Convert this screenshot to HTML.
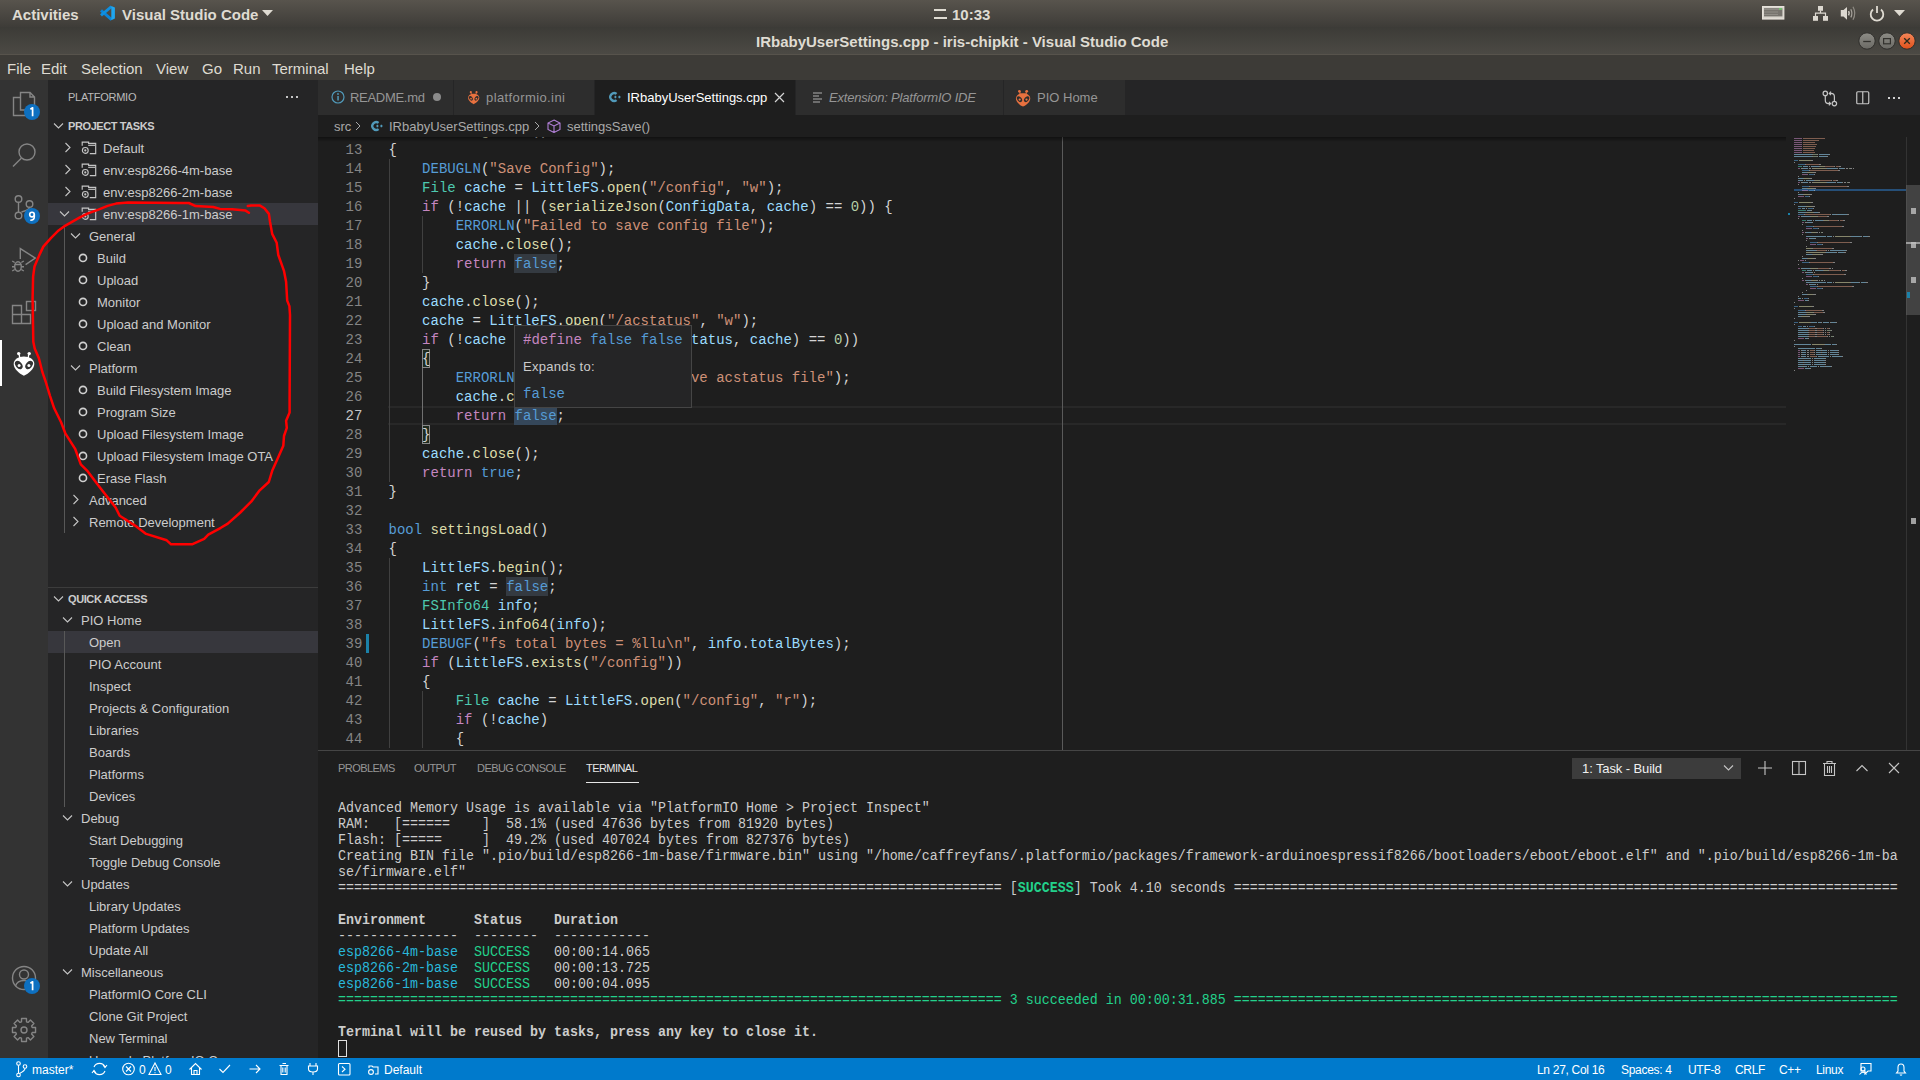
<!DOCTYPE html>
<html><head><meta charset="utf-8"><title>VS Code</title>
<style>
*{margin:0;padding:0;box-sizing:border-box}
html,body{width:1920px;height:1080px;overflow:hidden;background:#1e1e1e;font-family:'Liberation Sans', sans-serif;}
.a{position:absolute}
.t{position:absolute;white-space:pre;line-height:1}
.mono{font-family:'Liberation Mono', monospace}
</style></head><body>

<div class="a" style="left:0;top:0;width:1920px;height:27px;background:linear-gradient(#58544d,#3e3c38)"></div>
<div class="a" style="left:0;top:27px;width:1920px;height:28px;background:linear-gradient(#3c3b37,#4c4a45)"></div>
<div class="a" style="left:0;top:54px;width:1920px;height:1px;background:#57534c"></div>
<div class="a" style="left:0;top:55px;width:1920px;height:25px;background:#3d3b37"></div>
<div class="t" style="left:12px;top:6.50px;font-size:15px;height:15px;line-height:15px;color:#dfdbd2;font-weight:bold;font-family:'Liberation Sans', sans-serif;">Activities</div>
<svg class="a" style="left:96px;top:2px" width="24" height="24">
<path d="M5 8.3 L15.6 17.6" stroke="#0a84d8" stroke-width="2.9"/>
<path d="M5 13.4 L15.5 4.5" stroke="#0f8fe0" stroke-width="2.9"/>
<path d="M15.3 4 L18.9 5.6 V16.6 L15.3 18.2 Z" fill="#1fa6f0"/>
</svg>
<div class="t" style="left:122px;top:6.50px;font-size:15px;height:15px;line-height:15px;color:#dfdbd2;font-weight:bold;font-family:'Liberation Sans', sans-serif;">Visual Studio Code</div>
<svg class="a" style="left:262px;top:10px" width="11" height="7"><path d="M0 0 L11 0 L5.5 6 Z" fill="#dfdbd2"/></svg>
<div class="a" style="left:934px;top:9px;width:12px;height:2px;background:#dfdbd2"></div>
<div class="a" style="left:934px;top:17px;width:13px;height:2px;background:#dfdbd2"></div>
<div class="t" style="left:952px;top:6.50px;font-size:15px;height:15px;line-height:15px;color:#dfdbd2;font-weight:bold;font-family:'Liberation Sans', sans-serif;">10:33</div>
<svg class="a" style="left:1762px;top:6px" width="23" height="14"><rect x="0.6" y="0.6" width="21.2" height="12.4" fill="#d8d4cc" stroke="#e6e2da" stroke-width="1.2"/><rect x="2" y="2.2" width="18.4" height="8.2" fill="#77746e"/>
<path d="M2.5 3.5h15M2.5 6h13M2.5 8.5h13" stroke="#a9a59e" stroke-width="1" stroke-dasharray="1 1"/><rect x="17" y="2.2" width="3" height="1.5" fill="#6fcf6a"/></svg>
<svg class="a" style="left:1813px;top:5px" width="16" height="17"><rect x="5" y="1" width="5" height="4.8" fill="#dcd8d0"/><rect x="0" y="11" width="5" height="4.8" fill="#dcd8d0"/><rect x="10" y="11" width="5" height="4.8" fill="#dcd8d0"/>
<path d="M7.5 5.5 V8.2 M2.5 11 V8.2 H12.5 V11" stroke="#dcd8d0" stroke-width="1.2" fill="none"/></svg>
<svg class="a" style="left:1840px;top:5px" width="18" height="17"><path d="M0.8 5 H3.5 L7 2 V14.8 L3.5 11.5 H0.8 Z" fill="#dcd8d0"/>
<path d="M8.6 6.2 Q9.8 8.3 8.6 10.4" stroke="#dcd8d0" stroke-width="1.4" fill="none"/><path d="M10.8 4.2 Q13 8.3 10.8 12.4" stroke="#a9a59e" stroke-width="1.2" fill="none"/><path d="M13 1.8 Q16.5 8.3 13 14.8" stroke="#8e8a83" stroke-width="1.2" fill="none"/></svg>
<svg class="a" style="left:1869px;top:5px" width="16" height="17"><path d="M4 4.5 A6.3 6.3 0 1 0 12 4.5" stroke="#dfdbd2" stroke-width="1.8" fill="none"/><path d="M8 1 V8" stroke="#dfdbd2" stroke-width="1.8"/></svg>
<svg class="a" style="left:1894px;top:10px" width="12" height="7"><path d="M0 0 L11 0 L5.5 6 Z" fill="#dfdbd2"/></svg>
<div class="t" style="left:756px;top:33.50px;font-size:15px;height:15px;line-height:15px;color:#dfdbd2;font-weight:bold;font-family:'Liberation Sans', sans-serif;">IRbabyUserSettings.cpp - iris-chipkit - Visual Studio Code</div>
<svg class="a" style="left:1857px;top:31px" width="60" height="20">
<defs><linearGradient id="gb" x1="0" y1="0" x2="0" y2="1"><stop offset="0" stop-color="#8e8d87"/><stop offset="1" stop-color="#6a6964"/></linearGradient>
<linearGradient id="gc" x1="0" y1="0" x2="0" y2="1"><stop offset="0" stop-color="#f4875a"/><stop offset="1" stop-color="#e0501a"/></linearGradient></defs>
<circle cx="10" cy="10" r="8.2" fill="url(#gb)" stroke="#2f2e2b" stroke-width="1"/>
<path d="M6.2 10.5 H13.8" stroke="#33322e" stroke-width="1.3"/>
<circle cx="30" cy="10" r="8.2" fill="url(#gb)" stroke="#2f2e2b" stroke-width="1"/>
<rect x="26.6" y="7.6" width="6.8" height="5.2" fill="none" stroke="#33322e" stroke-width="1.2"/>
<circle cx="50" cy="10" r="8.2" fill="url(#gc)" stroke="#2f2e2b" stroke-width="1"/>
<path d="M47.2 7.2 L52.8 12.8 M52.8 7.2 L47.2 12.8" stroke="#2a2a1c" stroke-width="1.3"/>
</svg>
<div class="t" style="left:7px;top:60.50px;font-size:15px;height:15px;line-height:15px;color:#dfdbd2;font-weight:normal;font-family:'Liberation Sans', sans-serif;">File</div>
<div class="t" style="left:41px;top:60.50px;font-size:15px;height:15px;line-height:15px;color:#dfdbd2;font-weight:normal;font-family:'Liberation Sans', sans-serif;">Edit</div>
<div class="t" style="left:81px;top:60.50px;font-size:15px;height:15px;line-height:15px;color:#dfdbd2;font-weight:normal;font-family:'Liberation Sans', sans-serif;">Selection</div>
<div class="t" style="left:156px;top:60.50px;font-size:15px;height:15px;line-height:15px;color:#dfdbd2;font-weight:normal;font-family:'Liberation Sans', sans-serif;">View</div>
<div class="t" style="left:202px;top:60.50px;font-size:15px;height:15px;line-height:15px;color:#dfdbd2;font-weight:normal;font-family:'Liberation Sans', sans-serif;">Go</div>
<div class="t" style="left:233px;top:60.50px;font-size:15px;height:15px;line-height:15px;color:#dfdbd2;font-weight:normal;font-family:'Liberation Sans', sans-serif;">Run</div>
<div class="t" style="left:272px;top:60.50px;font-size:15px;height:15px;line-height:15px;color:#dfdbd2;font-weight:normal;font-family:'Liberation Sans', sans-serif;">Terminal</div>
<div class="t" style="left:344px;top:60.50px;font-size:15px;height:15px;line-height:15px;color:#dfdbd2;font-weight:normal;font-family:'Liberation Sans', sans-serif;">Help</div>
<div class="a" style="left:0;top:80px;width:48px;height:978px;background:#333333"></div>
<svg class="a" style="left:0;top:80px" width="48" height="320" fill="none" stroke="#858585" stroke-width="1.4">
<path d="M20.5 12.5 H30 L34.5 17 V30 H20.5 Z M30 12.5 V17 H34.5"/>
<path d="M20.5 17.5 H13.5 V35.5 H27.5 V30"/>
<circle cx="27" cy="72" r="8"/>
<path d="M21.3 78.3 L13 86.6"/>
<circle cx="18.5" cy="119" r="3.3"/><circle cx="29.5" cy="124" r="3.3"/><circle cx="18.5" cy="135.5" r="3.3"/>
<path d="M18.5 122.3 V132.2 M29.5 127.3 Q29.5 130 21.5 132"/>
<path d="M20.3 179 V168.6 L35.3 178.1 L25.6 184.6"/>
<g transform="translate(18,186.5)"><ellipse cx="0" cy="0" rx="3.3" ry="4.7"/><path d="M-3.3 -2 H3.3 M-3.3 -4 L-5.8 -5.5 M3.3 -4 L5.8 -5.5 M-3.5 0.3 H-6 M3.5 0.3 H6 M-3.3 3 L-5.8 4.5 M3.3 3 L5.8 4.5"/></g>
<path d="M12.5 225.5 H21.5 V234.5 H30.5 V243.5 H12.5 Z M12.5 234.5 H21.5 V243.5"/>
<rect x="26.5" y="221.5" width="9" height="9"/>
</svg>
<svg class="a" style="left:24px;top:104px" width="16" height="16"><circle cx="8" cy="8" r="8" fill="#0e70c0"/><path d="M6.4 5.2 L8.6 3.8 V12.2" stroke="#fff" stroke-width="1.7" fill="none" stroke-linejoin="round"/></svg>
<svg class="a" style="left:24px;top:208px" width="16" height="16"><circle cx="8" cy="8" r="8" fill="#0e70c0"/><circle cx="8" cy="6.6" r="2.3" stroke="#fff" stroke-width="1.6" fill="none"/><path d="M10.3 6.6 V8.8 Q10.3 12.3 6.3 12.3" stroke="#fff" stroke-width="1.6" fill="none"/></svg>
<div class="a" style="left:0;top:340px;width:2px;height:46px;background:#ffffff"></div>
<svg class="a" style="left:8px;top:346px" width="32" height="32">
<circle cx="10.7" cy="7.6" r="1.7" fill="#fff"/><circle cx="21.2" cy="7.6" r="1.7" fill="#fff"/>
<path d="M11.3 8.9 L11.7 12 M20.6 8.9 L20.3 12" stroke="#fff" stroke-width="1.3"/>
<path d="M15.9 10.6 C10 10.6 5.7 13.6 5.7 18 C5.7 22.8 11 27.6 15.9 29.7 C20.8 27.6 26.3 22.8 26.3 18 C26.3 13.6 21.8 10.6 15.9 10.6 Z" fill="#fff"/>
<ellipse cx="10.8" cy="19" rx="3.1" ry="4.7" fill="#333" transform="rotate(-38 10.8 19)"/><ellipse cx="21.1" cy="19" rx="3.1" ry="4.7" fill="#333" transform="rotate(38 21.1 19)"/>
<circle cx="11.1" cy="19.4" r="1.5" fill="#fff"/><circle cx="20.9" cy="19.4" r="1.5" fill="#fff"/>
</svg>
<svg class="a" style="left:0;top:960px" width="48" height="90" fill="none" stroke="#858585" stroke-width="1.4">
<circle cx="24" cy="18" r="11.5"/><circle cx="24" cy="14.5" r="4.5"/><path d="M15.5 26 C17 21 21 20.5 24 20.5 C27 20.5 31 21 32.5 26"/>
<path d="M32.22 67.49 L35.54 67.55 L35.54 72.45 L32.22 72.51 L31.59 74.04 L33.90 76.43 L30.43 79.90 L28.04 77.59 L26.51 78.22 L26.45 81.54 L21.55 81.54 L21.49 78.22 L19.96 77.59 L17.57 79.90 L14.10 76.43 L16.41 74.04 L15.78 72.51 L12.46 72.45 L12.46 67.55 L15.78 67.49 L16.41 65.96 L14.10 63.57 L17.57 60.10 L19.96 62.41 L21.49 61.78 L21.55 58.46 L26.45 58.46 L26.51 61.78 L28.04 62.41 L30.43 60.10 L33.90 63.57 L31.59 65.96 Z" stroke-linejoin="round"/>
<circle cx="24" cy="70" r="3"/>
</svg>
<svg class="a" style="left:24px;top:978px" width="16" height="16"><circle cx="8" cy="8" r="8" fill="#0e70c0"/><path d="M6.4 5.2 L8.6 3.8 V12.2" stroke="#fff" stroke-width="1.7" fill="none" stroke-linejoin="round"/></svg>
<div class="a" style="left:48px;top:80px;width:270px;height:978px;background:#252526"></div>
<div class="t" style="left:68px;top:92.00px;font-size:11px;height:11px;line-height:11px;color:#bbbbbb;font-weight:normal;font-family:'Liberation Sans', sans-serif;letter-spacing:-0.25px;">PLATFORMIO</div>
<div class="a" style="left:286px;top:96px;width:2px;height:2px;background:#c5c5c5"></div>
<div class="a" style="left:291px;top:96px;width:2px;height:2px;background:#c5c5c5"></div>
<div class="a" style="left:296px;top:96px;width:2px;height:2px;background:#c5c5c5"></div>
<svg class="a" style="left:53px;top:122px" width="12" height="8"><path d="M1 1.5 L5.5 6 L10 1.5" stroke="#c5c5c5" stroke-width="1.1" fill="none"/></svg>
<div class="t" style="left:68px;top:121.00px;font-size:11px;height:11px;line-height:11px;color:#cccccc;font-weight:bold;font-family:'Liberation Sans', sans-serif;letter-spacing:-0.4px;">PROJECT TASKS</div>
<svg class="a" style="left:64px;top:142px" width="8" height="12"><path d="M1.5 1 L6 5.5 L1.5 10" stroke="#c5c5c5" stroke-width="1.1" fill="none"/></svg>
<svg class="a" style="left:81px;top:141px" width="16" height="15" fill="none" stroke="#c5c5c5" stroke-width="1.15">
<path d="M1.2 4.8 V1.1 H7.6 V2.3 H14.7 V12.6 H8.8"/><path d="M7.2 4.3 H14.1"/><circle cx="4.3" cy="9.4" r="2.9"/><circle cx="4.3" cy="9.4" r="1.1" fill="#c5c5c5" stroke="none"/></svg>
<div class="t" style="left:103px;top:142.00px;font-size:13px;height:13px;line-height:13px;color:#cccccc;font-weight:normal;font-family:'Liberation Sans', sans-serif;">Default</div>
<svg class="a" style="left:64px;top:164px" width="8" height="12"><path d="M1.5 1 L6 5.5 L1.5 10" stroke="#c5c5c5" stroke-width="1.1" fill="none"/></svg>
<svg class="a" style="left:81px;top:163px" width="16" height="15" fill="none" stroke="#c5c5c5" stroke-width="1.15">
<path d="M1.2 4.8 V1.1 H7.6 V2.3 H14.7 V12.6 H8.8"/><path d="M7.2 4.3 H14.1"/><circle cx="4.3" cy="9.4" r="2.9"/><circle cx="4.3" cy="9.4" r="1.1" fill="#c5c5c5" stroke="none"/></svg>
<div class="t" style="left:103px;top:164.00px;font-size:13px;height:13px;line-height:13px;color:#cccccc;font-weight:normal;font-family:'Liberation Sans', sans-serif;">env:esp8266-4m-base</div>
<svg class="a" style="left:64px;top:186px" width="8" height="12"><path d="M1.5 1 L6 5.5 L1.5 10" stroke="#c5c5c5" stroke-width="1.1" fill="none"/></svg>
<svg class="a" style="left:81px;top:185px" width="16" height="15" fill="none" stroke="#c5c5c5" stroke-width="1.15">
<path d="M1.2 4.8 V1.1 H7.6 V2.3 H14.7 V12.6 H8.8"/><path d="M7.2 4.3 H14.1"/><circle cx="4.3" cy="9.4" r="2.9"/><circle cx="4.3" cy="9.4" r="1.1" fill="#c5c5c5" stroke="none"/></svg>
<div class="t" style="left:103px;top:186.00px;font-size:13px;height:13px;line-height:13px;color:#cccccc;font-weight:normal;font-family:'Liberation Sans', sans-serif;">env:esp8266-2m-base</div>
<div class="a" style="left:48px;top:203px;width:270px;height:22px;background:#37373d"></div>
<svg class="a" style="left:59px;top:210px" width="12" height="8"><path d="M1 1.5 L5.5 6 L10 1.5" stroke="#c5c5c5" stroke-width="1.1" fill="none"/></svg>
<svg class="a" style="left:81px;top:207px" width="16" height="15" fill="none" stroke="#c5c5c5" stroke-width="1.15">
<path d="M1.2 4.8 V1.1 H7.6 V2.3 H14.7 V12.6 H8.8"/><path d="M7.2 4.3 H14.1"/><circle cx="4.3" cy="9.4" r="2.9"/><circle cx="4.3" cy="9.4" r="1.1" fill="#c5c5c5" stroke="none"/></svg>
<div class="t" style="left:103px;top:208.00px;font-size:13px;height:13px;line-height:13px;color:#cccccc;font-weight:normal;font-family:'Liberation Sans', sans-serif;">env:esp8266-1m-base</div>
<svg class="a" style="left:70px;top:232px" width="12" height="8"><path d="M1 1.5 L5.5 6 L10 1.5" stroke="#c5c5c5" stroke-width="1.1" fill="none"/></svg>
<div class="t" style="left:89px;top:230.00px;font-size:13px;height:13px;line-height:13px;color:#cccccc;font-weight:normal;font-family:'Liberation Sans', sans-serif;">General</div>
<svg class="a" style="left:78px;top:252px" width="12" height="12"><circle cx="5" cy="5.9" r="3.55" fill="none" stroke="#d0d0d0" stroke-width="1.6"/></svg>
<div class="t" style="left:97px;top:252.00px;font-size:13px;height:13px;line-height:13px;color:#cccccc;font-weight:normal;font-family:'Liberation Sans', sans-serif;">Build</div>
<svg class="a" style="left:78px;top:274px" width="12" height="12"><circle cx="5" cy="5.9" r="3.55" fill="none" stroke="#d0d0d0" stroke-width="1.6"/></svg>
<div class="t" style="left:97px;top:274.00px;font-size:13px;height:13px;line-height:13px;color:#cccccc;font-weight:normal;font-family:'Liberation Sans', sans-serif;">Upload</div>
<svg class="a" style="left:78px;top:296px" width="12" height="12"><circle cx="5" cy="5.9" r="3.55" fill="none" stroke="#d0d0d0" stroke-width="1.6"/></svg>
<div class="t" style="left:97px;top:296.00px;font-size:13px;height:13px;line-height:13px;color:#cccccc;font-weight:normal;font-family:'Liberation Sans', sans-serif;">Monitor</div>
<svg class="a" style="left:78px;top:318px" width="12" height="12"><circle cx="5" cy="5.9" r="3.55" fill="none" stroke="#d0d0d0" stroke-width="1.6"/></svg>
<div class="t" style="left:97px;top:318.00px;font-size:13px;height:13px;line-height:13px;color:#cccccc;font-weight:normal;font-family:'Liberation Sans', sans-serif;">Upload and Monitor</div>
<svg class="a" style="left:78px;top:340px" width="12" height="12"><circle cx="5" cy="5.9" r="3.55" fill="none" stroke="#d0d0d0" stroke-width="1.6"/></svg>
<div class="t" style="left:97px;top:340.00px;font-size:13px;height:13px;line-height:13px;color:#cccccc;font-weight:normal;font-family:'Liberation Sans', sans-serif;">Clean</div>
<svg class="a" style="left:70px;top:364px" width="12" height="8"><path d="M1 1.5 L5.5 6 L10 1.5" stroke="#c5c5c5" stroke-width="1.1" fill="none"/></svg>
<div class="t" style="left:89px;top:362.00px;font-size:13px;height:13px;line-height:13px;color:#cccccc;font-weight:normal;font-family:'Liberation Sans', sans-serif;">Platform</div>
<svg class="a" style="left:78px;top:384px" width="12" height="12"><circle cx="5" cy="5.9" r="3.55" fill="none" stroke="#d0d0d0" stroke-width="1.6"/></svg>
<div class="t" style="left:97px;top:384.00px;font-size:13px;height:13px;line-height:13px;color:#cccccc;font-weight:normal;font-family:'Liberation Sans', sans-serif;">Build Filesystem Image</div>
<svg class="a" style="left:78px;top:406px" width="12" height="12"><circle cx="5" cy="5.9" r="3.55" fill="none" stroke="#d0d0d0" stroke-width="1.6"/></svg>
<div class="t" style="left:97px;top:406.00px;font-size:13px;height:13px;line-height:13px;color:#cccccc;font-weight:normal;font-family:'Liberation Sans', sans-serif;">Program Size</div>
<svg class="a" style="left:78px;top:428px" width="12" height="12"><circle cx="5" cy="5.9" r="3.55" fill="none" stroke="#d0d0d0" stroke-width="1.6"/></svg>
<div class="t" style="left:97px;top:428.00px;font-size:13px;height:13px;line-height:13px;color:#cccccc;font-weight:normal;font-family:'Liberation Sans', sans-serif;">Upload Filesystem Image</div>
<svg class="a" style="left:78px;top:450px" width="12" height="12"><circle cx="5" cy="5.9" r="3.55" fill="none" stroke="#d0d0d0" stroke-width="1.6"/></svg>
<div class="t" style="left:97px;top:450.00px;font-size:13px;height:13px;line-height:13px;color:#cccccc;font-weight:normal;font-family:'Liberation Sans', sans-serif;">Upload Filesystem Image OTA</div>
<svg class="a" style="left:78px;top:472px" width="12" height="12"><circle cx="5" cy="5.9" r="3.55" fill="none" stroke="#d0d0d0" stroke-width="1.6"/></svg>
<div class="t" style="left:97px;top:472.00px;font-size:13px;height:13px;line-height:13px;color:#cccccc;font-weight:normal;font-family:'Liberation Sans', sans-serif;">Erase Flash</div>
<svg class="a" style="left:72px;top:494px" width="8" height="12"><path d="M1.5 1 L6 5.5 L1.5 10" stroke="#c5c5c5" stroke-width="1.1" fill="none"/></svg>
<div class="t" style="left:89px;top:494.00px;font-size:13px;height:13px;line-height:13px;color:#cccccc;font-weight:normal;font-family:'Liberation Sans', sans-serif;">Advanced</div>
<svg class="a" style="left:72px;top:516px" width="8" height="12"><path d="M1.5 1 L6 5.5 L1.5 10" stroke="#c5c5c5" stroke-width="1.1" fill="none"/></svg>
<div class="t" style="left:89px;top:516.00px;font-size:13px;height:13px;line-height:13px;color:#cccccc;font-weight:normal;font-family:'Liberation Sans', sans-serif;">Remote Development</div>
<div class="a" style="left:64px;top:225px;width:1px;height:308px;background:#585858"></div>
<div class="a" style="left:48px;top:587px;width:270px;height:1px;background:#3c3c3c"></div>
<svg class="a" style="left:53px;top:595px" width="12" height="8"><path d="M1 1.5 L5.5 6 L10 1.5" stroke="#c5c5c5" stroke-width="1.1" fill="none"/></svg>
<div class="t" style="left:68px;top:594.00px;font-size:11px;height:11px;line-height:11px;color:#cccccc;font-weight:bold;font-family:'Liberation Sans', sans-serif;letter-spacing:-0.4px;">QUICK ACCESS</div>
<svg class="a" style="left:62px;top:616px" width="12" height="8"><path d="M1 1.5 L5.5 6 L10 1.5" stroke="#c5c5c5" stroke-width="1.1" fill="none"/></svg>
<div class="t" style="left:81px;top:614.00px;font-size:13px;height:13px;line-height:13px;color:#cccccc;font-weight:normal;font-family:'Liberation Sans', sans-serif;">PIO Home</div>
<div class="a" style="left:48px;top:631px;width:270px;height:22px;background:#37373d"></div>
<div class="t" style="left:89px;top:636.00px;font-size:13px;height:13px;line-height:13px;color:#cccccc;font-weight:normal;font-family:'Liberation Sans', sans-serif;">Open</div>
<div class="t" style="left:89px;top:658.00px;font-size:13px;height:13px;line-height:13px;color:#cccccc;font-weight:normal;font-family:'Liberation Sans', sans-serif;">PIO Account</div>
<div class="t" style="left:89px;top:680.00px;font-size:13px;height:13px;line-height:13px;color:#cccccc;font-weight:normal;font-family:'Liberation Sans', sans-serif;">Inspect</div>
<div class="t" style="left:89px;top:702.00px;font-size:13px;height:13px;line-height:13px;color:#cccccc;font-weight:normal;font-family:'Liberation Sans', sans-serif;">Projects &amp; Configuration</div>
<div class="t" style="left:89px;top:724.00px;font-size:13px;height:13px;line-height:13px;color:#cccccc;font-weight:normal;font-family:'Liberation Sans', sans-serif;">Libraries</div>
<div class="t" style="left:89px;top:746.00px;font-size:13px;height:13px;line-height:13px;color:#cccccc;font-weight:normal;font-family:'Liberation Sans', sans-serif;">Boards</div>
<div class="t" style="left:89px;top:768.00px;font-size:13px;height:13px;line-height:13px;color:#cccccc;font-weight:normal;font-family:'Liberation Sans', sans-serif;">Platforms</div>
<div class="t" style="left:89px;top:790.00px;font-size:13px;height:13px;line-height:13px;color:#cccccc;font-weight:normal;font-family:'Liberation Sans', sans-serif;">Devices</div>
<svg class="a" style="left:62px;top:814px" width="12" height="8"><path d="M1 1.5 L5.5 6 L10 1.5" stroke="#c5c5c5" stroke-width="1.1" fill="none"/></svg>
<div class="t" style="left:81px;top:812.00px;font-size:13px;height:13px;line-height:13px;color:#cccccc;font-weight:normal;font-family:'Liberation Sans', sans-serif;">Debug</div>
<div class="t" style="left:89px;top:834.00px;font-size:13px;height:13px;line-height:13px;color:#cccccc;font-weight:normal;font-family:'Liberation Sans', sans-serif;">Start Debugging</div>
<div class="t" style="left:89px;top:856.00px;font-size:13px;height:13px;line-height:13px;color:#cccccc;font-weight:normal;font-family:'Liberation Sans', sans-serif;">Toggle Debug Console</div>
<svg class="a" style="left:62px;top:880px" width="12" height="8"><path d="M1 1.5 L5.5 6 L10 1.5" stroke="#c5c5c5" stroke-width="1.1" fill="none"/></svg>
<div class="t" style="left:81px;top:878.00px;font-size:13px;height:13px;line-height:13px;color:#cccccc;font-weight:normal;font-family:'Liberation Sans', sans-serif;">Updates</div>
<div class="t" style="left:89px;top:900.00px;font-size:13px;height:13px;line-height:13px;color:#cccccc;font-weight:normal;font-family:'Liberation Sans', sans-serif;">Library Updates</div>
<div class="t" style="left:89px;top:922.00px;font-size:13px;height:13px;line-height:13px;color:#cccccc;font-weight:normal;font-family:'Liberation Sans', sans-serif;">Platform Updates</div>
<div class="t" style="left:89px;top:944.00px;font-size:13px;height:13px;line-height:13px;color:#cccccc;font-weight:normal;font-family:'Liberation Sans', sans-serif;">Update All</div>
<svg class="a" style="left:62px;top:968px" width="12" height="8"><path d="M1 1.5 L5.5 6 L10 1.5" stroke="#c5c5c5" stroke-width="1.1" fill="none"/></svg>
<div class="t" style="left:81px;top:966.00px;font-size:13px;height:13px;line-height:13px;color:#cccccc;font-weight:normal;font-family:'Liberation Sans', sans-serif;">Miscellaneous</div>
<div class="t" style="left:89px;top:988.00px;font-size:13px;height:13px;line-height:13px;color:#cccccc;font-weight:normal;font-family:'Liberation Sans', sans-serif;">PlatformIO Core CLI</div>
<div class="t" style="left:89px;top:1010.00px;font-size:13px;height:13px;line-height:13px;color:#cccccc;font-weight:normal;font-family:'Liberation Sans', sans-serif;">Clone Git Project</div>
<div class="t" style="left:89px;top:1032.00px;font-size:13px;height:13px;line-height:13px;color:#cccccc;font-weight:normal;font-family:'Liberation Sans', sans-serif;">New Terminal</div>
<div class="t" style="left:89px;top:1054.00px;font-size:13px;height:13px;line-height:13px;color:#cccccc;font-weight:normal;font-family:'Liberation Sans', sans-serif;">Upgrade PlatformIO Core</div>
<div class="a" style="left:64px;top:631px;width:1px;height:176px;background:#585858"></div>
<div class="a" style="left:318px;top:80px;width:1602px;height:35px;background:#252526"></div>
<div class="a" style="left:318px;top:80px;width:135px;height:35px;background:#2d2d2d"></div>
<div class="a" style="left:454px;top:80px;width:140px;height:35px;background:#2d2d2d"></div>
<div class="a" style="left:595px;top:80px;width:200px;height:35px;background:#1e1e1e"></div>
<div class="a" style="left:796px;top:80px;width:207px;height:35px;background:#2d2d2d"></div>
<div class="a" style="left:1004px;top:80px;width:121px;height:35px;background:#2d2d2d"></div>
<svg class="a" style="left:331px;top:90px" width="14" height="14"><circle cx="7" cy="7" r="6" fill="none" stroke="#519aba" stroke-width="1.2"/><rect x="6.3" y="6" width="1.5" height="4.5" fill="#519aba"/><circle cx="7" cy="4" r="0.9" fill="#519aba"/></svg>
<div class="t" style="left:350px;top:91.00px;font-size:13px;height:13px;line-height:13px;color:#969696;font-weight:normal;font-family:'Liberation Sans', sans-serif;letter-spacing:-0.3px;">README.md</div>
<div class="a" style="left:433px;top:93px;width:8px;height:8px;border-radius:50%;background:#8b8b8b"></div>
<svg class="a" style="left:464.8px;top:87.7px" width="17.4" height="17.4" viewBox="0 0 32 32">
<circle cx="10.7" cy="7.6" r="2" fill="#e8713f"/><circle cx="21.2" cy="7.6" r="2" fill="#e8713f"/>
<path d="M11.3 8.9 L11.7 12 M20.6 8.9 L20.3 12" stroke="#e8713f" stroke-width="1.6"/>
<path d="M15.9 10.6 C10 10.6 5.7 13.6 5.7 18 C5.7 22.8 11 27.6 15.9 29.7 C20.8 27.6 26.3 22.8 26.3 18 C26.3 13.6 21.8 10.6 15.9 10.6 Z" fill="#e8713f"/>
<ellipse cx="10.8" cy="19" rx="3.1" ry="4.7" fill="#2d2d2d" transform="rotate(-38 10.8 19)"/><ellipse cx="21.1" cy="19" rx="3.1" ry="4.7" fill="#2d2d2d" transform="rotate(38 21.1 19)"/>
<circle cx="11.1" cy="19.6" r="1.6" fill="#e8713f"/><circle cx="20.9" cy="19.6" r="1.6" fill="#e8713f"/></svg>
<div class="t" style="left:486px;top:91.00px;font-size:13px;height:13px;line-height:13px;color:#969696;font-weight:normal;font-family:'Liberation Sans', sans-serif;letter-spacing:0.4px;">platformio.ini</div>
<svg class="a" style="left:609px;top:91px" width="14" height="12"><path d="M7.6 2.9 A3.9 3.9 0 1 0 7.6 9.1" stroke="#519aba" stroke-width="2.3" fill="none"/>
<path d="M5.2 6 H7.6 M6.4 4.8 V7.2 M9.1 6 H11.7 M10.4 4.7 V7.3" stroke="#519aba" stroke-width="1.2"/></svg>
<div class="t" style="left:627px;top:91.00px;font-size:13px;height:13px;line-height:13px;color:#ffffff;font-weight:normal;font-family:'Liberation Sans', sans-serif;">IRbabyUserSettings.cpp</div>
<svg class="a" style="left:774px;top:92px" width="11" height="11"><path d="M1 1 L10 10 M10 1 L1 10" stroke="#d4d4d4" stroke-width="1.2"/></svg>
<svg class="a" style="left:813px;top:92px" width="11" height="11"><path d="M0 1 H9 M0 4 H6 M0 7 H9 M0 10 H7" stroke="#b0b0b0" stroke-width="1.2"/></svg>
<div class="t" style="left:829px;top:91.00px;font-size:13px;height:13px;line-height:13px;color:#969696;font-weight:normal;font-family:'Liberation Sans', sans-serif;font-style:italic;letter-spacing:-0.2px;">Extension: PlatformIO IDE</div>
<svg class="a" style="left:1011.9px;top:85.5px" width="22.2" height="22.2" viewBox="0 0 32 32">
<circle cx="10.7" cy="7.6" r="2" fill="#e8713f"/><circle cx="21.2" cy="7.6" r="2" fill="#e8713f"/>
<path d="M11.3 8.9 L11.7 12 M20.6 8.9 L20.3 12" stroke="#e8713f" stroke-width="1.6"/>
<path d="M15.9 10.6 C10 10.6 5.7 13.6 5.7 18 C5.7 22.8 11 27.6 15.9 29.7 C20.8 27.6 26.3 22.8 26.3 18 C26.3 13.6 21.8 10.6 15.9 10.6 Z" fill="#e8713f"/>
<ellipse cx="10.8" cy="19" rx="3.1" ry="4.7" fill="#2d2d2d" transform="rotate(-38 10.8 19)"/><ellipse cx="21.1" cy="19" rx="3.1" ry="4.7" fill="#2d2d2d" transform="rotate(38 21.1 19)"/>
<circle cx="11.1" cy="19.6" r="1.6" fill="#e8713f"/><circle cx="20.9" cy="19.6" r="1.6" fill="#e8713f"/></svg>
<div class="t" style="left:1037px;top:91.00px;font-size:13px;height:13px;line-height:13px;color:#969696;font-weight:normal;font-family:'Liberation Sans', sans-serif;">PIO Home</div>
<svg class="a" style="left:1820px;top:88px" width="60" height="20" fill="none" stroke="#c5c5c5" stroke-width="1.2">
<circle cx="5.3" cy="5.4" r="2.2"/><circle cx="14.4" cy="15.6" r="2.2"/>
<path d="M5.3 7.6 V12.3 Q5.3 15.6 8.6 15.6 H10.6 M8.9 13.9 L10.6 15.6 L8.9 17.3"/>
<path d="M14.4 13.4 V8.7 Q14.4 5.4 11.1 5.4 H9.3 M11 3.7 L9.3 5.4 L11 7.1"/>
<rect x="36.75" y="3.75" width="12" height="12" rx="1"/><path d="M42.75 3.75 V15.75"/>
</svg>
<div class="a" style="left:1888px;top:97px;width:2px;height:2px;background:#d0d0d0"></div>
<div class="a" style="left:1893px;top:97px;width:2px;height:2px;background:#d0d0d0"></div>
<div class="a" style="left:1898px;top:97px;width:2px;height:2px;background:#d0d0d0"></div>
<div class="a" style="left:318px;top:115px;width:1602px;height:22px;background:#1e1e1e"></div>
<div class="t" style="left:334px;top:120.00px;font-size:13px;height:13px;line-height:13px;color:#a9a9a9;font-weight:normal;font-family:'Liberation Sans', sans-serif;">src</div>
<svg class="a" style="left:355px;top:121px" width="7" height="10"><path d="M1 1 L5 5 L1 9" stroke="#a9a9a9" stroke-width="1" fill="none"/></svg>
<svg class="a" style="left:371px;top:120px" width="14" height="12"><path d="M7.6 2.9 A3.9 3.9 0 1 0 7.6 9.1" stroke="#519aba" stroke-width="2.3" fill="none"/>
<path d="M5.2 6 H7.6 M6.4 4.8 V7.2 M9.1 6 H11.7 M10.4 4.7 V7.3" stroke="#519aba" stroke-width="1.2"/></svg>
<div class="t" style="left:389px;top:120.00px;font-size:13px;height:13px;line-height:13px;color:#a9a9a9;font-weight:normal;font-family:'Liberation Sans', sans-serif;">IRbabyUserSettings.cpp</div>
<svg class="a" style="left:534px;top:121px" width="7" height="10"><path d="M1 1 L5 5 L1 9" stroke="#a9a9a9" stroke-width="1" fill="none"/></svg>
<svg class="a" style="left:547px;top:119px" width="14" height="14" fill="none" stroke="#b180d7" stroke-width="1.1"><path d="M7 1 L13 4 V10.5 L7 13.5 L1 10.5 V4 Z M1 4 L7 7 L13 4 M7 7 V13.5"/></svg>
<div class="t" style="left:567px;top:120.00px;font-size:13px;height:13px;line-height:13px;color:#a9a9a9;font-weight:normal;font-family:'Liberation Sans', sans-serif;">settingsSave()</div>
<div class="a" style="left:318px;top:137px;width:1602px;height:613px;background:#1e1e1e;overflow:hidden">
<div class="a" style="left:70px;top:269px;width:1398px;height:19px;border-top:2px solid #282828;border-bottom:2px solid #282828"></div>
<div class="a" style="left:744px;top:0;width:1px;height:613px;background:#5a5a5a"></div>
<div class="a" style="left:196.0px;top:117px;width:42.5px;height:19px;background:#343a41"></div>
<div class="a" style="left:196.0px;top:271px;width:42.5px;height:17px;background:#35475a"></div>
<div class="a" style="left:187.6px;top:440px;width:42.5px;height:19px;background:#343a41"></div>
<div class="a" style="left:104.1px;top:212px;width:8.4px;height:19px;border:1px solid #888;background:#1e2a1e"></div>
<div class="a" style="left:104.1px;top:288px;width:8.4px;height:19px;border:1px solid #888;background:#1e2a1e"></div>
<div class="a" style="left:70.5px;top:22px;width:1px;height:323px;background:#404040"></div>
<div class="a" style="left:104.1px;top:79px;width:1px;height:57px;background:#404040"></div>
<div class="a" style="left:104.1px;top:231px;width:1px;height:57px;background:#707070"></div>
<div class="a" style="left:70.5px;top:421px;width:1px;height:190px;background:#404040"></div>
<div class="a" style="left:104.1px;top:554px;width:1px;height:57px;background:#404040"></div>
<div class="a" style="left:48px;top:497px;width:3px;height:19px;background:#1b81a8"></div>
<div class="t mono" style="left:27.5px;top:-15px;transform:scaleY(1.08);height:19px;line-height:19px;font-size:14px;color:#858585">12</div>
<div class="t mono" style="left:70.5px;top:-15px;transform:scaleY(1.08);height:19px;line-height:19px;font-size:14px"><span style="color:#569cd6">bool</span> <span style="color:#dcdcaa">settingsSave</span><span style="color:#d4d4d4">(</span><span style="color:#d4d4d4">)</span></div>
<div class="t mono" style="left:27.5px;top:4px;transform:scaleY(1.08);height:19px;line-height:19px;font-size:14px;color:#858585">13</div>
<div class="t mono" style="left:70.5px;top:4px;transform:scaleY(1.08);height:19px;line-height:19px;font-size:14px"><span style="color:#d4d4d4">{</span></div>
<div class="t mono" style="left:27.5px;top:23px;transform:scaleY(1.08);height:19px;line-height:19px;font-size:14px;color:#858585">14</div>
<div class="t mono" style="left:70.5px;top:23px;transform:scaleY(1.08);height:19px;line-height:19px;font-size:14px">    <span style="color:#569cd6">DEBUGLN</span><span style="color:#d4d4d4">(</span><span style="color:#ce9178">&quot;Save Config&quot;</span><span style="color:#d4d4d4">)</span><span style="color:#d4d4d4">;</span></div>
<div class="t mono" style="left:27.5px;top:42px;transform:scaleY(1.08);height:19px;line-height:19px;font-size:14px;color:#858585">15</div>
<div class="t mono" style="left:70.5px;top:42px;transform:scaleY(1.08);height:19px;line-height:19px;font-size:14px">    <span style="color:#4ec9b0">File</span> <span style="color:#9cdcfe">cache</span> <span style="color:#d4d4d4">=</span> <span style="color:#9cdcfe">LittleFS</span><span style="color:#d4d4d4">.</span><span style="color:#dcdcaa">open</span><span style="color:#d4d4d4">(</span><span style="color:#ce9178">&quot;/config&quot;</span><span style="color:#d4d4d4">,</span> <span style="color:#ce9178">&quot;w&quot;</span><span style="color:#d4d4d4">)</span><span style="color:#d4d4d4">;</span></div>
<div class="t mono" style="left:27.5px;top:61px;transform:scaleY(1.08);height:19px;line-height:19px;font-size:14px;color:#858585">16</div>
<div class="t mono" style="left:70.5px;top:61px;transform:scaleY(1.08);height:19px;line-height:19px;font-size:14px">    <span style="color:#c586c0">if</span> <span style="color:#d4d4d4">(</span><span style="color:#d4d4d4">!</span><span style="color:#9cdcfe">cache</span> <span style="color:#d4d4d4">|</span><span style="color:#d4d4d4">|</span> <span style="color:#d4d4d4">(</span><span style="color:#dcdcaa">serializeJson</span><span style="color:#d4d4d4">(</span><span style="color:#9cdcfe">ConfigData</span><span style="color:#d4d4d4">,</span> <span style="color:#9cdcfe">cache</span><span style="color:#d4d4d4">)</span> <span style="color:#d4d4d4">=</span><span style="color:#d4d4d4">=</span> <span style="color:#b5cea8">0</span><span style="color:#d4d4d4">)</span><span style="color:#d4d4d4">)</span> <span style="color:#d4d4d4">{</span></div>
<div class="t mono" style="left:27.5px;top:80px;transform:scaleY(1.08);height:19px;line-height:19px;font-size:14px;color:#858585">17</div>
<div class="t mono" style="left:70.5px;top:80px;transform:scaleY(1.08);height:19px;line-height:19px;font-size:14px">        <span style="color:#569cd6">ERRORLN</span><span style="color:#d4d4d4">(</span><span style="color:#ce9178">&quot;Failed to save config file&quot;</span><span style="color:#d4d4d4">)</span><span style="color:#d4d4d4">;</span></div>
<div class="t mono" style="left:27.5px;top:99px;transform:scaleY(1.08);height:19px;line-height:19px;font-size:14px;color:#858585">18</div>
<div class="t mono" style="left:70.5px;top:99px;transform:scaleY(1.08);height:19px;line-height:19px;font-size:14px">        <span style="color:#9cdcfe">cache</span><span style="color:#d4d4d4">.</span><span style="color:#dcdcaa">close</span><span style="color:#d4d4d4">(</span><span style="color:#d4d4d4">)</span><span style="color:#d4d4d4">;</span></div>
<div class="t mono" style="left:27.5px;top:118px;transform:scaleY(1.08);height:19px;line-height:19px;font-size:14px;color:#858585">19</div>
<div class="t mono" style="left:70.5px;top:118px;transform:scaleY(1.08);height:19px;line-height:19px;font-size:14px">        <span style="color:#c586c0">return</span> <span style="color:#569cd6">false</span><span style="color:#d4d4d4">;</span></div>
<div class="t mono" style="left:27.5px;top:137px;transform:scaleY(1.08);height:19px;line-height:19px;font-size:14px;color:#858585">20</div>
<div class="t mono" style="left:70.5px;top:137px;transform:scaleY(1.08);height:19px;line-height:19px;font-size:14px">    <span style="color:#d4d4d4">}</span></div>
<div class="t mono" style="left:27.5px;top:156px;transform:scaleY(1.08);height:19px;line-height:19px;font-size:14px;color:#858585">21</div>
<div class="t mono" style="left:70.5px;top:156px;transform:scaleY(1.08);height:19px;line-height:19px;font-size:14px">    <span style="color:#9cdcfe">cache</span><span style="color:#d4d4d4">.</span><span style="color:#dcdcaa">close</span><span style="color:#d4d4d4">(</span><span style="color:#d4d4d4">)</span><span style="color:#d4d4d4">;</span></div>
<div class="t mono" style="left:27.5px;top:175px;transform:scaleY(1.08);height:19px;line-height:19px;font-size:14px;color:#858585">22</div>
<div class="t mono" style="left:70.5px;top:175px;transform:scaleY(1.08);height:19px;line-height:19px;font-size:14px">    <span style="color:#9cdcfe">cache</span> <span style="color:#d4d4d4">=</span> <span style="color:#9cdcfe">LittleFS</span><span style="color:#d4d4d4">.</span><span style="color:#dcdcaa">open</span><span style="color:#d4d4d4">(</span><span style="color:#ce9178">&quot;/acstatus&quot;</span><span style="color:#d4d4d4">,</span> <span style="color:#ce9178">&quot;w&quot;</span><span style="color:#d4d4d4">)</span><span style="color:#d4d4d4">;</span></div>
<div class="t mono" style="left:27.5px;top:194px;transform:scaleY(1.08);height:19px;line-height:19px;font-size:14px;color:#858585">23</div>
<div class="t mono" style="left:70.5px;top:194px;transform:scaleY(1.08);height:19px;line-height:19px;font-size:14px">    <span style="color:#c586c0">if</span> <span style="color:#d4d4d4">(</span><span style="color:#d4d4d4">!</span><span style="color:#9cdcfe">cache</span> <span style="color:#d4d4d4">|</span><span style="color:#d4d4d4">|</span> <span style="color:#d4d4d4">(</span><span style="color:#dcdcaa">serializeJson</span><span style="color:#d4d4d4">(</span><span style="color:#9cdcfe">ACStatus</span><span style="color:#d4d4d4">,</span> <span style="color:#9cdcfe">cache</span><span style="color:#d4d4d4">)</span> <span style="color:#d4d4d4">=</span><span style="color:#d4d4d4">=</span> <span style="color:#b5cea8">0</span><span style="color:#d4d4d4">)</span><span style="color:#d4d4d4">)</span></div>
<div class="t mono" style="left:27.5px;top:213px;transform:scaleY(1.08);height:19px;line-height:19px;font-size:14px;color:#858585">24</div>
<div class="t mono" style="left:70.5px;top:213px;transform:scaleY(1.08);height:19px;line-height:19px;font-size:14px">    <span style="color:#d4d4d4">{</span></div>
<div class="t mono" style="left:27.5px;top:232px;transform:scaleY(1.08);height:19px;line-height:19px;font-size:14px;color:#858585">25</div>
<div class="t mono" style="left:70.5px;top:232px;transform:scaleY(1.08);height:19px;line-height:19px;font-size:14px">        <span style="color:#569cd6">ERRORLN</span><span style="color:#d4d4d4">(</span><span style="color:#ce9178">&quot;Failed to open &amp; save acstatus file&quot;</span><span style="color:#d4d4d4">)</span><span style="color:#d4d4d4">;</span></div>
<div class="t mono" style="left:27.5px;top:251px;transform:scaleY(1.08);height:19px;line-height:19px;font-size:14px;color:#858585">26</div>
<div class="t mono" style="left:70.5px;top:251px;transform:scaleY(1.08);height:19px;line-height:19px;font-size:14px">        <span style="color:#9cdcfe">cache</span><span style="color:#d4d4d4">.</span><span style="color:#dcdcaa">close</span><span style="color:#d4d4d4">(</span><span style="color:#d4d4d4">)</span><span style="color:#d4d4d4">;</span></div>
<div class="t mono" style="left:27.5px;top:270px;transform:scaleY(1.08);height:19px;line-height:19px;font-size:14px;color:#c6c6c6">27</div>
<div class="t mono" style="left:70.5px;top:270px;transform:scaleY(1.08);height:19px;line-height:19px;font-size:14px">        <span style="color:#c586c0">return</span> <span style="color:#569cd6">false</span><span style="color:#d4d4d4">;</span></div>
<div class="t mono" style="left:27.5px;top:289px;transform:scaleY(1.08);height:19px;line-height:19px;font-size:14px;color:#858585">28</div>
<div class="t mono" style="left:70.5px;top:289px;transform:scaleY(1.08);height:19px;line-height:19px;font-size:14px">    <span style="color:#d4d4d4">}</span></div>
<div class="t mono" style="left:27.5px;top:308px;transform:scaleY(1.08);height:19px;line-height:19px;font-size:14px;color:#858585">29</div>
<div class="t mono" style="left:70.5px;top:308px;transform:scaleY(1.08);height:19px;line-height:19px;font-size:14px">    <span style="color:#9cdcfe">cache</span><span style="color:#d4d4d4">.</span><span style="color:#dcdcaa">close</span><span style="color:#d4d4d4">(</span><span style="color:#d4d4d4">)</span><span style="color:#d4d4d4">;</span></div>
<div class="t mono" style="left:27.5px;top:327px;transform:scaleY(1.08);height:19px;line-height:19px;font-size:14px;color:#858585">30</div>
<div class="t mono" style="left:70.5px;top:327px;transform:scaleY(1.08);height:19px;line-height:19px;font-size:14px">    <span style="color:#c586c0">return</span> <span style="color:#569cd6">true</span><span style="color:#d4d4d4">;</span></div>
<div class="t mono" style="left:27.5px;top:346px;transform:scaleY(1.08);height:19px;line-height:19px;font-size:14px;color:#858585">31</div>
<div class="t mono" style="left:70.5px;top:346px;transform:scaleY(1.08);height:19px;line-height:19px;font-size:14px"><span style="color:#d4d4d4">}</span></div>
<div class="t mono" style="left:27.5px;top:365px;transform:scaleY(1.08);height:19px;line-height:19px;font-size:14px;color:#858585">32</div>
<div class="t mono" style="left:27.5px;top:384px;transform:scaleY(1.08);height:19px;line-height:19px;font-size:14px;color:#858585">33</div>
<div class="t mono" style="left:70.5px;top:384px;transform:scaleY(1.08);height:19px;line-height:19px;font-size:14px"><span style="color:#569cd6">bool</span> <span style="color:#dcdcaa">settingsLoad</span><span style="color:#d4d4d4">(</span><span style="color:#d4d4d4">)</span></div>
<div class="t mono" style="left:27.5px;top:403px;transform:scaleY(1.08);height:19px;line-height:19px;font-size:14px;color:#858585">34</div>
<div class="t mono" style="left:70.5px;top:403px;transform:scaleY(1.08);height:19px;line-height:19px;font-size:14px"><span style="color:#d4d4d4">{</span></div>
<div class="t mono" style="left:27.5px;top:422px;transform:scaleY(1.08);height:19px;line-height:19px;font-size:14px;color:#858585">35</div>
<div class="t mono" style="left:70.5px;top:422px;transform:scaleY(1.08);height:19px;line-height:19px;font-size:14px">    <span style="color:#9cdcfe">LittleFS</span><span style="color:#d4d4d4">.</span><span style="color:#dcdcaa">begin</span><span style="color:#d4d4d4">(</span><span style="color:#d4d4d4">)</span><span style="color:#d4d4d4">;</span></div>
<div class="t mono" style="left:27.5px;top:441px;transform:scaleY(1.08);height:19px;line-height:19px;font-size:14px;color:#858585">36</div>
<div class="t mono" style="left:70.5px;top:441px;transform:scaleY(1.08);height:19px;line-height:19px;font-size:14px">    <span style="color:#569cd6">int</span> <span style="color:#9cdcfe">ret</span> <span style="color:#d4d4d4">=</span> <span style="color:#569cd6">false</span><span style="color:#d4d4d4">;</span></div>
<div class="t mono" style="left:27.5px;top:460px;transform:scaleY(1.08);height:19px;line-height:19px;font-size:14px;color:#858585">37</div>
<div class="t mono" style="left:70.5px;top:460px;transform:scaleY(1.08);height:19px;line-height:19px;font-size:14px">    <span style="color:#4ec9b0">FSInfo64</span> <span style="color:#9cdcfe">info</span><span style="color:#d4d4d4">;</span></div>
<div class="t mono" style="left:27.5px;top:479px;transform:scaleY(1.08);height:19px;line-height:19px;font-size:14px;color:#858585">38</div>
<div class="t mono" style="left:70.5px;top:479px;transform:scaleY(1.08);height:19px;line-height:19px;font-size:14px">    <span style="color:#9cdcfe">LittleFS</span><span style="color:#d4d4d4">.</span><span style="color:#dcdcaa">info64</span><span style="color:#d4d4d4">(</span><span style="color:#9cdcfe">info</span><span style="color:#d4d4d4">)</span><span style="color:#d4d4d4">;</span></div>
<div class="t mono" style="left:27.5px;top:498px;transform:scaleY(1.08);height:19px;line-height:19px;font-size:14px;color:#858585">39</div>
<div class="t mono" style="left:70.5px;top:498px;transform:scaleY(1.08);height:19px;line-height:19px;font-size:14px">    <span style="color:#569cd6">DEBUGF</span><span style="color:#d4d4d4">(</span><span style="color:#ce9178">&quot;fs total bytes = %llu\n&quot;</span><span style="color:#d4d4d4">,</span> <span style="color:#9cdcfe">info</span><span style="color:#d4d4d4">.</span><span style="color:#9cdcfe">totalBytes</span><span style="color:#d4d4d4">)</span><span style="color:#d4d4d4">;</span></div>
<div class="t mono" style="left:27.5px;top:517px;transform:scaleY(1.08);height:19px;line-height:19px;font-size:14px;color:#858585">40</div>
<div class="t mono" style="left:70.5px;top:517px;transform:scaleY(1.08);height:19px;line-height:19px;font-size:14px">    <span style="color:#c586c0">if</span> <span style="color:#d4d4d4">(</span><span style="color:#9cdcfe">LittleFS</span><span style="color:#d4d4d4">.</span><span style="color:#dcdcaa">exists</span><span style="color:#d4d4d4">(</span><span style="color:#ce9178">&quot;/config&quot;</span><span style="color:#d4d4d4">)</span><span style="color:#d4d4d4">)</span></div>
<div class="t mono" style="left:27.5px;top:536px;transform:scaleY(1.08);height:19px;line-height:19px;font-size:14px;color:#858585">41</div>
<div class="t mono" style="left:70.5px;top:536px;transform:scaleY(1.08);height:19px;line-height:19px;font-size:14px">    <span style="color:#d4d4d4">{</span></div>
<div class="t mono" style="left:27.5px;top:555px;transform:scaleY(1.08);height:19px;line-height:19px;font-size:14px;color:#858585">42</div>
<div class="t mono" style="left:70.5px;top:555px;transform:scaleY(1.08);height:19px;line-height:19px;font-size:14px">        <span style="color:#4ec9b0">File</span> <span style="color:#9cdcfe">cache</span> <span style="color:#d4d4d4">=</span> <span style="color:#9cdcfe">LittleFS</span><span style="color:#d4d4d4">.</span><span style="color:#dcdcaa">open</span><span style="color:#d4d4d4">(</span><span style="color:#ce9178">&quot;/config&quot;</span><span style="color:#d4d4d4">,</span> <span style="color:#ce9178">&quot;r&quot;</span><span style="color:#d4d4d4">)</span><span style="color:#d4d4d4">;</span></div>
<div class="t mono" style="left:27.5px;top:574px;transform:scaleY(1.08);height:19px;line-height:19px;font-size:14px;color:#858585">43</div>
<div class="t mono" style="left:70.5px;top:574px;transform:scaleY(1.08);height:19px;line-height:19px;font-size:14px">        <span style="color:#c586c0">if</span> <span style="color:#d4d4d4">(</span><span style="color:#d4d4d4">!</span><span style="color:#9cdcfe">cache</span><span style="color:#d4d4d4">)</span></div>
<div class="t mono" style="left:27.5px;top:593px;transform:scaleY(1.08);height:19px;line-height:19px;font-size:14px;color:#858585">44</div>
<div class="t mono" style="left:70.5px;top:593px;transform:scaleY(1.08);height:19px;line-height:19px;font-size:14px">        <span style="color:#d4d4d4">{</span></div>
</div>
<div class="a" style="left:318px;top:137px;width:1468px;height:5px;background:linear-gradient(rgba(0,0,0,0.45),rgba(0,0,0,0))"></div>
<div class="a" style="left:514px;top:325px;width:178px;height:83px;background:#252526;border:1px solid #454545"></div>
<div class="t mono" style="left:523px;top:331px;height:19px;line-height:19px;font-size:14px;transform:scaleY(1.08)"><span style="color:#c586c0">#define</span> <span style="color:#569cd6">false</span> <span style="color:#569cd6">false</span></div>
<div class="t" style="left:523px;top:360.00px;font-size:13px;height:13px;line-height:13px;color:#cccccc;font-weight:normal;font-family:'Liberation Sans', sans-serif;letter-spacing:0.3px;">Expands to:</div>
<div class="t mono" style="left:523px;top:385px;height:19px;line-height:19px;font-size:14px;transform:scaleY(1.08);color:#569cd6">false</div>
<div class="a" style="left:1906px;top:137px;width:1px;height:613px;background:#333333"></div>
<div class="a" style="left:1906px;top:185px;width:14px;height:130px;background:rgba(121,121,121,0.4)"></div>
<div class="a" style="left:1911px;top:208px;width:5px;height:6px;background:#c0c0c0;opacity:0.8"></div>
<div class="a" style="left:1911px;top:242px;width:5px;height:6px;background:#c0c0c0;opacity:0.8"></div>
<div class="a" style="left:1911px;top:277px;width:5px;height:6px;background:#c0c0c0;opacity:0.8"></div>
<div class="a" style="left:1911px;top:518px;width:5px;height:6px;background:#c0c0c0;opacity:0.8"></div>
<div class="a" style="left:1906px;top:242px;width:14px;height:2px;background:#c0c0c0;opacity:0.7"></div>
<div class="a" style="left:1907px;top:292px;width:3px;height:6px;background:#1b81a8"></div>
<div class="a" style="left:318px;top:750px;width:1602px;height:308px;background:#1e1e1e;border-top:1px solid #454545"></div>
<div class="t" style="left:338px;top:763.00px;font-size:11px;height:11px;line-height:11px;color:#969696;font-weight:normal;font-family:'Liberation Sans', sans-serif;letter-spacing:-0.55px;">PROBLEMS</div>
<div class="t" style="left:414px;top:763.00px;font-size:11px;height:11px;line-height:11px;color:#969696;font-weight:normal;font-family:'Liberation Sans', sans-serif;letter-spacing:-0.55px;">OUTPUT</div>
<div class="t" style="left:477px;top:763.00px;font-size:11px;height:11px;line-height:11px;color:#969696;font-weight:normal;font-family:'Liberation Sans', sans-serif;letter-spacing:-0.55px;">DEBUG CONSOLE</div>
<div class="t" style="left:586px;top:763.00px;font-size:11px;height:11px;line-height:11px;color:#e7e7e7;font-weight:normal;font-family:'Liberation Sans', sans-serif;letter-spacing:-0.55px;">TERMINAL</div>
<div class="a" style="left:586px;top:782px;width:53px;height:1px;background:#e7e7e7"></div>
<div class="a" style="left:1572px;top:758px;width:169px;height:21px;background:#3c3c3c"></div>
<div class="t" style="left:1582px;top:762.00px;font-size:13px;height:13px;line-height:13px;color:#f0f0f0;font-weight:normal;font-family:'Liberation Sans', sans-serif;letter-spacing:-0.1px;">1: Task - Build</div>
<svg class="a" style="left:1723px;top:764px" width="11" height="8"><path d="M1 1.5 L5.5 6 L10 1.5" stroke="#c5c5c5" stroke-width="1.1" fill="none"/></svg>
<svg class="a" style="left:1756px;top:759px" width="150" height="18" fill="none" stroke="#c5c5c5" stroke-width="1.1">
<path d="M9 2 V16 M2 9 H16"/>
<rect x="36.5" y="2.5" width="13" height="13"/><path d="M43 2.5 V15.5"/>
<path d="M67 4.5 H80 M71 4.5 V2.5 H76 V4.5 M68.5 4.5 V16.5 H78.5 V4.5 M71.5 7 V14 M73.5 7 V14 M75.5 7 V14"/>
<path d="M100.5 12 L106 6.5 L111.5 12"/>
<path d="M133 4 L143 14 M143 4 L133 14"/>
</svg>
<div class="t mono" style="left:338px;top:800.5px;transform:scaleY(1.12);height:16px;line-height:16px;font-size:13.333px"><span style="color:#cccccc;">Advanced Memory Usage is available via &quot;PlatformIO Home &gt; Project Inspect&quot;</span></div>
<div class="t mono" style="left:338px;top:816.5px;transform:scaleY(1.12);height:16px;line-height:16px;font-size:13.333px"><span style="color:#cccccc;">RAM:   [======    ]  58.1% (used 47636 bytes from 81920 bytes)</span></div>
<div class="t mono" style="left:338px;top:832.5px;transform:scaleY(1.12);height:16px;line-height:16px;font-size:13.333px"><span style="color:#cccccc;">Flash: [=====     ]  49.2% (used 407024 bytes from 827376 bytes)</span></div>
<div class="t mono" style="left:338px;top:848.5px;transform:scaleY(1.12);height:16px;line-height:16px;font-size:13.333px"><span style="color:#cccccc;">Creating BIN file &quot;.pio/build/esp8266-1m-base/firmware.bin&quot; using &quot;/home/caffreyfans/.platformio/packages/framework-arduinoespressif8266/bootloaders/eboot/eboot.elf&quot; and &quot;.pio/build/esp8266-1m-ba</span></div>
<div class="t mono" style="left:338px;top:864.5px;transform:scaleY(1.12);height:16px;line-height:16px;font-size:13.333px"><span style="color:#cccccc;">se/firmware.elf&quot;</span></div>
<div class="t mono" style="left:338px;top:880.5px;transform:scaleY(1.12);height:16px;line-height:16px;font-size:13.333px"><span style="color:#cccccc;">=================================================================================== [</span><span style="color:#23d18b;font-weight:bold;">SUCCESS</span><span style="color:#cccccc;">] Took 4.10 seconds ===================================================================================</span></div>
<div class="t mono" style="left:338px;top:912.5px;transform:scaleY(1.12);height:16px;line-height:16px;font-size:13.333px"><span style="color:#cccccc;font-weight:bold;">Environment      Status    Duration</span></div>
<div class="t mono" style="left:338px;top:928.5px;transform:scaleY(1.12);height:16px;line-height:16px;font-size:13.333px"><span style="color:#cccccc;">---------------  --------  ------------</span></div>
<div class="t mono" style="left:338px;top:944.5px;transform:scaleY(1.12);height:16px;line-height:16px;font-size:13.333px"><span style="color:#29b8db;">esp8266-4m-base</span><span style="color:#cccccc;">  </span><span style="color:#23d18b;">SUCCESS</span><span style="color:#cccccc;">   00:00:14.065</span></div>
<div class="t mono" style="left:338px;top:960.5px;transform:scaleY(1.12);height:16px;line-height:16px;font-size:13.333px"><span style="color:#29b8db;">esp8266-2m-base</span><span style="color:#cccccc;">  </span><span style="color:#23d18b;">SUCCESS</span><span style="color:#cccccc;">   00:00:13.725</span></div>
<div class="t mono" style="left:338px;top:976.5px;transform:scaleY(1.12);height:16px;line-height:16px;font-size:13.333px"><span style="color:#29b8db;">esp8266-1m-base</span><span style="color:#cccccc;">  </span><span style="color:#23d18b;">SUCCESS</span><span style="color:#cccccc;">   00:00:04.095</span></div>
<div class="t mono" style="left:338px;top:992.5px;transform:scaleY(1.12);height:16px;line-height:16px;font-size:13.333px"><span style="color:#23d18b;">=================================================================================== 3 succeeded in 00:00:31.885 ===================================================================================</span></div>
<div class="t mono" style="left:338px;top:1024.5px;transform:scaleY(1.12);height:16px;line-height:16px;font-size:13.333px"><span style="color:#cccccc;font-weight:bold;">Terminal will be reused by tasks, press any key to close it.</span></div>
<div class="a" style="left:338px;top:1040px;width:9px;height:17px;border:1px solid #e0e0e0"></div>
<div class="a" style="left:0;top:1058px;width:1920px;height:22px;background:#007acc"></div>
<svg class="a" style="left:0;top:1058px" width="440" height="22" fill="none" stroke="#ffffff" stroke-width="1.1">
<circle cx="18.5" cy="5.5" r="1.8"/><circle cx="18.5" cy="17" r="1.8"/><circle cx="25" cy="8.5" r="1.8"/><path d="M18.5 7.3 V15.2 M25 10.3 Q25 13 19.5 15.5"/>
<path d="M94 9 A6 6 0 0 1 105 9 M105 13 A6 6 0 0 1 94 13 M103 7 L105 9.5 L107 7 M92 15 L94 12.5 L96 15"/>
<circle cx="128.5" cy="11" r="5.8"/><path d="M126 8.5 L131 13.5 M131 8.5 L126 13.5"/>
<path d="M155 5 L161 16.5 H149 Z M155 9 V13 M155 14.3 V15.2"/>
<path d="M189.5 11.5 L195.5 5.5 L201.5 11.5 M191.5 10 V16.5 H199.5 V10 M194 16.5 V12.5 H197 V16.5"/>
<path d="M219.5 11 L223 14.5 L230 7"/>
<path d="M249.5 11 H260 M256 7 L260 11 L256 15"/>
<path d="M279.5 7.5 H288.5 M281 7.5 V16.5 H287 V7.5 M282.5 5.5 H286 M282.8 9.5 V14.5 M285.2 9.5 V14.5"/>
<path d="M310 5 V8 M316 5 V8 M308.5 8 H317.5 V11 Q317.5 14 313 14 Q308.5 14 308.5 11 Z M313 14 V17"/>
<rect x="338.5" y="5.5" width="11.5" height="11.5" rx="1"/><path d="M342 8.5 L345 11.2 L342 14"/>
<path d="M369 10 V8 H372 L373 9 H378 V16 H375"/><circle cx="371" cy="14" r="2.4"/>
</svg>
<div class="t" style="left:32px;top:1063.50px;font-size:12px;height:12px;line-height:12px;color:#ffffff;font-weight:normal;font-family:'Liberation Sans', sans-serif;">master*</div>
<div class="t" style="left:139px;top:1063.50px;font-size:12px;height:12px;line-height:12px;color:#ffffff;font-weight:normal;font-family:'Liberation Sans', sans-serif;">0</div>
<div class="t" style="left:165px;top:1063.50px;font-size:12px;height:12px;line-height:12px;color:#ffffff;font-weight:normal;font-family:'Liberation Sans', sans-serif;">0</div>
<div class="t" style="left:384px;top:1063.50px;font-size:12px;height:12px;line-height:12px;color:#ffffff;font-weight:normal;font-family:'Liberation Sans', sans-serif;">Default</div>
<div class="t" style="left:1537px;top:1063.50px;font-size:12px;height:12px;line-height:12px;color:#ffffff;font-weight:normal;font-family:'Liberation Sans', sans-serif;letter-spacing:-0.3px;">Ln 27, Col 16</div>
<div class="t" style="left:1621px;top:1063.50px;font-size:12px;height:12px;line-height:12px;color:#ffffff;font-weight:normal;font-family:'Liberation Sans', sans-serif;letter-spacing:-0.3px;">Spaces: 4</div>
<div class="t" style="left:1688px;top:1063.50px;font-size:12px;height:12px;line-height:12px;color:#ffffff;font-weight:normal;font-family:'Liberation Sans', sans-serif;letter-spacing:-0.3px;">UTF-8</div>
<div class="t" style="left:1735px;top:1063.50px;font-size:12px;height:12px;line-height:12px;color:#ffffff;font-weight:normal;font-family:'Liberation Sans', sans-serif;letter-spacing:-0.3px;">CRLF</div>
<div class="t" style="left:1779px;top:1063.50px;font-size:12px;height:12px;line-height:12px;color:#ffffff;font-weight:normal;font-family:'Liberation Sans', sans-serif;letter-spacing:-0.3px;">C++</div>
<div class="t" style="left:1816px;top:1063.50px;font-size:12px;height:12px;line-height:12px;color:#ffffff;font-weight:normal;font-family:'Liberation Sans', sans-serif;letter-spacing:-0.3px;">Linux</div>
<svg class="a" style="left:1855px;top:1058px" width="60" height="22" fill="none" stroke="#ffffff" stroke-width="1.1">
<path d="M6 5.5 H16 V13 H13 L10 16 V13 H6 Z"/><circle cx="8" cy="11" r="2"/><path d="M4.5 16.5 Q8 12 11.5 16.5"/>
<path d="M41.5 15 H50.5 L49 13 V9.5 Q49 6 46 6 Q43 6 43 9.5 V13 Z M45 16.5 Q46 18 47 16.5"/>
</svg>
<div class="a" style="left:1794px;top:189px;width:112px;height:2px;background:#264f78"></div>
<svg class="a" style="left:1794px;top:137.5px;opacity:0.55" width="111" height="240" shape-rendering="crispEdges"><rect x="0" y="0" width="8" height="1" fill="#c586c0"/><rect x="9" y="0" width="22" height="1" fill="#ce9178"/><rect x="0" y="2" width="8" height="1" fill="#c586c0"/><rect x="9" y="2" width="16" height="1" fill="#ce9178"/><rect x="0" y="4" width="8" height="1" fill="#c586c0"/><rect x="9" y="4" width="12" height="1" fill="#ce9178"/><rect x="0" y="6" width="8" height="1" fill="#c586c0"/><rect x="9" y="6" width="14" height="1" fill="#ce9178"/><rect x="0" y="8" width="8" height="1" fill="#c586c0"/><rect x="9" y="8" width="13" height="1" fill="#ce9178"/><rect x="0" y="10" width="8" height="1" fill="#c586c0"/><rect x="9" y="10" width="12" height="1" fill="#ce9178"/><rect x="0" y="12" width="8" height="1" fill="#c586c0"/><rect x="9" y="12" width="11" height="1" fill="#ce9178"/><rect x="0" y="14" width="8" height="1" fill="#c586c0"/><rect x="9" y="14" width="12" height="1" fill="#ce9178"/><rect x="0" y="16" width="18" height="1" fill="#9cdcfe"/><rect x="18" y="16" width="1" height="1" fill="#d4d4d4"/><rect x="19" y="16" width="4" height="1" fill="#b5cea8"/><rect x="23" y="16" width="1" height="1" fill="#d4d4d4"/><rect x="25" y="16" width="10" height="1" fill="#9cdcfe"/><rect x="35" y="16" width="1" height="1" fill="#d4d4d4"/><rect x="0" y="18" width="18" height="1" fill="#9cdcfe"/><rect x="18" y="18" width="1" height="1" fill="#d4d4d4"/><rect x="19" y="18" width="4" height="1" fill="#b5cea8"/><rect x="23" y="18" width="1" height="1" fill="#d4d4d4"/><rect x="25" y="18" width="8" height="1" fill="#9cdcfe"/><rect x="33" y="18" width="1" height="1" fill="#d4d4d4"/><rect x="0" y="22" width="4" height="1" fill="#569cd6"/><rect x="5" y="22" width="12" height="1" fill="#dcdcaa"/><rect x="17" y="22" width="1" height="1" fill="#d4d4d4"/><rect x="18" y="22" width="1" height="1" fill="#d4d4d4"/><rect x="0" y="24" width="1" height="1" fill="#d4d4d4"/><rect x="4" y="26" width="7" height="1" fill="#569cd6"/><rect x="11" y="26" width="1" height="1" fill="#d4d4d4"/><rect x="12" y="26" width="13" height="1" fill="#ce9178"/><rect x="25" y="26" width="1" height="1" fill="#d4d4d4"/><rect x="26" y="26" width="1" height="1" fill="#d4d4d4"/><rect x="4" y="28" width="4" height="1" fill="#4ec9b0"/><rect x="9" y="28" width="5" height="1" fill="#9cdcfe"/><rect x="15" y="28" width="1" height="1" fill="#d4d4d4"/><rect x="17" y="28" width="8" height="1" fill="#9cdcfe"/><rect x="25" y="28" width="1" height="1" fill="#d4d4d4"/><rect x="26" y="28" width="4" height="1" fill="#dcdcaa"/><rect x="30" y="28" width="1" height="1" fill="#d4d4d4"/><rect x="31" y="28" width="9" height="1" fill="#ce9178"/><rect x="40" y="28" width="1" height="1" fill="#d4d4d4"/><rect x="42" y="28" width="3" height="1" fill="#ce9178"/><rect x="45" y="28" width="1" height="1" fill="#d4d4d4"/><rect x="46" y="28" width="1" height="1" fill="#d4d4d4"/><rect x="4" y="30" width="2" height="1" fill="#c586c0"/><rect x="7" y="30" width="1" height="1" fill="#d4d4d4"/><rect x="8" y="30" width="1" height="1" fill="#d4d4d4"/><rect x="9" y="30" width="5" height="1" fill="#9cdcfe"/><rect x="15" y="30" width="1" height="1" fill="#d4d4d4"/><rect x="16" y="30" width="1" height="1" fill="#d4d4d4"/><rect x="18" y="30" width="1" height="1" fill="#d4d4d4"/><rect x="19" y="30" width="13" height="1" fill="#dcdcaa"/><rect x="32" y="30" width="1" height="1" fill="#d4d4d4"/><rect x="33" y="30" width="10" height="1" fill="#9cdcfe"/><rect x="43" y="30" width="1" height="1" fill="#d4d4d4"/><rect x="45" y="30" width="5" height="1" fill="#9cdcfe"/><rect x="50" y="30" width="1" height="1" fill="#d4d4d4"/><rect x="52" y="30" width="1" height="1" fill="#d4d4d4"/><rect x="53" y="30" width="1" height="1" fill="#d4d4d4"/><rect x="55" y="30" width="1" height="1" fill="#b5cea8"/><rect x="56" y="30" width="1" height="1" fill="#d4d4d4"/><rect x="57" y="30" width="1" height="1" fill="#d4d4d4"/><rect x="59" y="30" width="1" height="1" fill="#d4d4d4"/><rect x="8" y="32" width="7" height="1" fill="#569cd6"/><rect x="15" y="32" width="1" height="1" fill="#d4d4d4"/><rect x="16" y="32" width="28" height="1" fill="#ce9178"/><rect x="44" y="32" width="1" height="1" fill="#d4d4d4"/><rect x="45" y="32" width="1" height="1" fill="#d4d4d4"/><rect x="8" y="34" width="5" height="1" fill="#9cdcfe"/><rect x="13" y="34" width="1" height="1" fill="#d4d4d4"/><rect x="14" y="34" width="5" height="1" fill="#dcdcaa"/><rect x="19" y="34" width="1" height="1" fill="#d4d4d4"/><rect x="20" y="34" width="1" height="1" fill="#d4d4d4"/><rect x="21" y="34" width="1" height="1" fill="#d4d4d4"/><rect x="8" y="36" width="6" height="1" fill="#c586c0"/><rect x="15" y="36" width="5" height="1" fill="#569cd6"/><rect x="20" y="36" width="1" height="1" fill="#d4d4d4"/><rect x="4" y="38" width="1" height="1" fill="#d4d4d4"/><rect x="4" y="40" width="5" height="1" fill="#9cdcfe"/><rect x="9" y="40" width="1" height="1" fill="#d4d4d4"/><rect x="10" y="40" width="5" height="1" fill="#dcdcaa"/><rect x="15" y="40" width="1" height="1" fill="#d4d4d4"/><rect x="16" y="40" width="1" height="1" fill="#d4d4d4"/><rect x="17" y="40" width="1" height="1" fill="#d4d4d4"/><rect x="4" y="42" width="5" height="1" fill="#9cdcfe"/><rect x="10" y="42" width="1" height="1" fill="#d4d4d4"/><rect x="12" y="42" width="8" height="1" fill="#9cdcfe"/><rect x="20" y="42" width="1" height="1" fill="#d4d4d4"/><rect x="21" y="42" width="4" height="1" fill="#dcdcaa"/><rect x="25" y="42" width="1" height="1" fill="#d4d4d4"/><rect x="26" y="42" width="11" height="1" fill="#ce9178"/><rect x="37" y="42" width="1" height="1" fill="#d4d4d4"/><rect x="39" y="42" width="3" height="1" fill="#ce9178"/><rect x="42" y="42" width="1" height="1" fill="#d4d4d4"/><rect x="43" y="42" width="1" height="1" fill="#d4d4d4"/><rect x="4" y="44" width="2" height="1" fill="#c586c0"/><rect x="7" y="44" width="1" height="1" fill="#d4d4d4"/><rect x="8" y="44" width="1" height="1" fill="#d4d4d4"/><rect x="9" y="44" width="5" height="1" fill="#9cdcfe"/><rect x="15" y="44" width="1" height="1" fill="#d4d4d4"/><rect x="16" y="44" width="1" height="1" fill="#d4d4d4"/><rect x="18" y="44" width="1" height="1" fill="#d4d4d4"/><rect x="19" y="44" width="13" height="1" fill="#dcdcaa"/><rect x="32" y="44" width="1" height="1" fill="#d4d4d4"/><rect x="33" y="44" width="8" height="1" fill="#9cdcfe"/><rect x="41" y="44" width="1" height="1" fill="#d4d4d4"/><rect x="43" y="44" width="5" height="1" fill="#9cdcfe"/><rect x="48" y="44" width="1" height="1" fill="#d4d4d4"/><rect x="50" y="44" width="1" height="1" fill="#d4d4d4"/><rect x="51" y="44" width="1" height="1" fill="#d4d4d4"/><rect x="53" y="44" width="1" height="1" fill="#b5cea8"/><rect x="54" y="44" width="1" height="1" fill="#d4d4d4"/><rect x="55" y="44" width="1" height="1" fill="#d4d4d4"/><rect x="4" y="46" width="1" height="1" fill="#d4d4d4"/><rect x="8" y="48" width="7" height="1" fill="#569cd6"/><rect x="15" y="48" width="1" height="1" fill="#d4d4d4"/><rect x="16" y="48" width="37" height="1" fill="#ce9178"/><rect x="53" y="48" width="1" height="1" fill="#d4d4d4"/><rect x="54" y="48" width="1" height="1" fill="#d4d4d4"/><rect x="8" y="50" width="5" height="1" fill="#9cdcfe"/><rect x="13" y="50" width="1" height="1" fill="#d4d4d4"/><rect x="14" y="50" width="5" height="1" fill="#dcdcaa"/><rect x="19" y="50" width="1" height="1" fill="#d4d4d4"/><rect x="20" y="50" width="1" height="1" fill="#d4d4d4"/><rect x="21" y="50" width="1" height="1" fill="#d4d4d4"/><rect x="8" y="52" width="6" height="1" fill="#c586c0"/><rect x="15" y="52" width="5" height="1" fill="#569cd6"/><rect x="20" y="52" width="1" height="1" fill="#d4d4d4"/><rect x="4" y="54" width="1" height="1" fill="#d4d4d4"/><rect x="4" y="56" width="5" height="1" fill="#9cdcfe"/><rect x="9" y="56" width="1" height="1" fill="#d4d4d4"/><rect x="10" y="56" width="5" height="1" fill="#dcdcaa"/><rect x="15" y="56" width="1" height="1" fill="#d4d4d4"/><rect x="16" y="56" width="1" height="1" fill="#d4d4d4"/><rect x="17" y="56" width="1" height="1" fill="#d4d4d4"/><rect x="4" y="58" width="6" height="1" fill="#c586c0"/><rect x="11" y="58" width="4" height="1" fill="#569cd6"/><rect x="15" y="58" width="1" height="1" fill="#d4d4d4"/><rect x="0" y="60" width="1" height="1" fill="#d4d4d4"/><rect x="0" y="64" width="4" height="1" fill="#569cd6"/><rect x="5" y="64" width="12" height="1" fill="#dcdcaa"/><rect x="17" y="64" width="1" height="1" fill="#d4d4d4"/><rect x="18" y="64" width="1" height="1" fill="#d4d4d4"/><rect x="0" y="66" width="1" height="1" fill="#d4d4d4"/><rect x="4" y="68" width="8" height="1" fill="#9cdcfe"/><rect x="12" y="68" width="1" height="1" fill="#d4d4d4"/><rect x="13" y="68" width="5" height="1" fill="#dcdcaa"/><rect x="18" y="68" width="1" height="1" fill="#d4d4d4"/><rect x="19" y="68" width="1" height="1" fill="#d4d4d4"/><rect x="20" y="68" width="1" height="1" fill="#d4d4d4"/><rect x="4" y="70" width="3" height="1" fill="#569cd6"/><rect x="8" y="70" width="3" height="1" fill="#9cdcfe"/><rect x="12" y="70" width="1" height="1" fill="#d4d4d4"/><rect x="14" y="70" width="5" height="1" fill="#569cd6"/><rect x="19" y="70" width="1" height="1" fill="#d4d4d4"/><rect x="4" y="72" width="8" height="1" fill="#4ec9b0"/><rect x="13" y="72" width="4" height="1" fill="#9cdcfe"/><rect x="17" y="72" width="1" height="1" fill="#d4d4d4"/><rect x="4" y="74" width="8" height="1" fill="#9cdcfe"/><rect x="12" y="74" width="1" height="1" fill="#d4d4d4"/><rect x="13" y="74" width="6" height="1" fill="#dcdcaa"/><rect x="19" y="74" width="1" height="1" fill="#d4d4d4"/><rect x="20" y="74" width="4" height="1" fill="#9cdcfe"/><rect x="24" y="74" width="1" height="1" fill="#d4d4d4"/><rect x="25" y="74" width="1" height="1" fill="#d4d4d4"/><rect x="4" y="76" width="6" height="1" fill="#569cd6"/><rect x="10" y="76" width="1" height="1" fill="#d4d4d4"/><rect x="11" y="76" width="25" height="1" fill="#ce9178"/><rect x="36" y="76" width="1" height="1" fill="#d4d4d4"/><rect x="38" y="76" width="4" height="1" fill="#9cdcfe"/><rect x="42" y="76" width="1" height="1" fill="#d4d4d4"/><rect x="43" y="76" width="10" height="1" fill="#9cdcfe"/><rect x="53" y="76" width="1" height="1" fill="#d4d4d4"/><rect x="54" y="76" width="1" height="1" fill="#d4d4d4"/><rect x="4" y="78" width="2" height="1" fill="#c586c0"/><rect x="7" y="78" width="1" height="1" fill="#d4d4d4"/><rect x="8" y="78" width="8" height="1" fill="#9cdcfe"/><rect x="16" y="78" width="1" height="1" fill="#d4d4d4"/><rect x="17" y="78" width="6" height="1" fill="#dcdcaa"/><rect x="23" y="78" width="1" height="1" fill="#d4d4d4"/><rect x="24" y="78" width="9" height="1" fill="#ce9178"/><rect x="33" y="78" width="1" height="1" fill="#d4d4d4"/><rect x="34" y="78" width="1" height="1" fill="#d4d4d4"/><rect x="4" y="80" width="1" height="1" fill="#d4d4d4"/><rect x="8" y="82" width="4" height="1" fill="#4ec9b0"/><rect x="13" y="82" width="5" height="1" fill="#9cdcfe"/><rect x="19" y="82" width="1" height="1" fill="#d4d4d4"/><rect x="21" y="82" width="8" height="1" fill="#9cdcfe"/><rect x="29" y="82" width="1" height="1" fill="#d4d4d4"/><rect x="30" y="82" width="4" height="1" fill="#dcdcaa"/><rect x="34" y="82" width="1" height="1" fill="#d4d4d4"/><rect x="35" y="82" width="9" height="1" fill="#ce9178"/><rect x="44" y="82" width="1" height="1" fill="#d4d4d4"/><rect x="46" y="82" width="3" height="1" fill="#ce9178"/><rect x="49" y="82" width="1" height="1" fill="#d4d4d4"/><rect x="50" y="82" width="1" height="1" fill="#d4d4d4"/><rect x="8" y="84" width="2" height="1" fill="#c586c0"/><rect x="11" y="84" width="1" height="1" fill="#d4d4d4"/><rect x="12" y="84" width="1" height="1" fill="#d4d4d4"/><rect x="13" y="84" width="5" height="1" fill="#9cdcfe"/><rect x="18" y="84" width="1" height="1" fill="#d4d4d4"/><rect x="8" y="86" width="1" height="1" fill="#d4d4d4"/><rect x="12" y="88" width="7" height="1" fill="#569cd6"/><rect x="19" y="88" width="1" height="1" fill="#d4d4d4"/><rect x="20" y="88" width="28" height="1" fill="#ce9178"/><rect x="48" y="88" width="1" height="1" fill="#d4d4d4"/><rect x="49" y="88" width="1" height="1" fill="#d4d4d4"/><rect x="12" y="90" width="6" height="1" fill="#c586c0"/><rect x="19" y="90" width="5" height="1" fill="#569cd6"/><rect x="24" y="90" width="1" height="1" fill="#d4d4d4"/><rect x="8" y="92" width="1" height="1" fill="#d4d4d4"/><rect x="8" y="94" width="2" height="1" fill="#c586c0"/><rect x="11" y="94" width="1" height="1" fill="#d4d4d4"/><rect x="12" y="94" width="5" height="1" fill="#9cdcfe"/><rect x="17" y="94" width="1" height="1" fill="#d4d4d4"/><rect x="18" y="94" width="4" height="1" fill="#dcdcaa"/><rect x="22" y="94" width="1" height="1" fill="#d4d4d4"/><rect x="23" y="94" width="1" height="1" fill="#d4d4d4"/><rect x="25" y="94" width="1" height="1" fill="#d4d4d4"/><rect x="27" y="94" width="1" height="1" fill="#b5cea8"/><rect x="28" y="94" width="1" height="1" fill="#d4d4d4"/><rect x="8" y="96" width="1" height="1" fill="#d4d4d4"/><rect x="12" y="98" width="20" height="1" fill="#9cdcfe"/><rect x="33" y="98" width="5" height="1" fill="#9cdcfe"/><rect x="39" y="98" width="1" height="1" fill="#d4d4d4"/><rect x="41" y="98" width="15" height="1" fill="#dcdcaa"/><rect x="56" y="98" width="1" height="1" fill="#d4d4d4"/><rect x="57" y="98" width="10" height="1" fill="#9cdcfe"/><rect x="67" y="98" width="1" height="1" fill="#d4d4d4"/><rect x="69" y="98" width="5" height="1" fill="#9cdcfe"/><rect x="74" y="98" width="1" height="1" fill="#d4d4d4"/><rect x="75" y="98" width="1" height="1" fill="#d4d4d4"/><rect x="12" y="100" width="2" height="1" fill="#c586c0"/><rect x="15" y="100" width="1" height="1" fill="#d4d4d4"/><rect x="16" y="100" width="5" height="1" fill="#9cdcfe"/><rect x="21" y="100" width="1" height="1" fill="#d4d4d4"/><rect x="12" y="102" width="1" height="1" fill="#d4d4d4"/><rect x="16" y="104" width="7" height="1" fill="#569cd6"/><rect x="23" y="104" width="1" height="1" fill="#d4d4d4"/><rect x="24" y="104" width="32" height="1" fill="#ce9178"/><rect x="56" y="104" width="1" height="1" fill="#d4d4d4"/><rect x="57" y="104" width="1" height="1" fill="#d4d4d4"/><rect x="16" y="106" width="6" height="1" fill="#c586c0"/><rect x="23" y="106" width="5" height="1" fill="#569cd6"/><rect x="28" y="106" width="1" height="1" fill="#d4d4d4"/><rect x="12" y="108" width="1" height="1" fill="#d4d4d4"/><rect x="12" y="110" width="6" height="1" fill="#dcdcaa"/><rect x="18" y="110" width="1" height="1" fill="#d4d4d4"/><rect x="19" y="110" width="19" height="1" fill="#ce9178"/><rect x="38" y="110" width="1" height="1" fill="#d4d4d4"/><rect x="39" y="110" width="1" height="1" fill="#d4d4d4"/><rect x="12" y="112" width="10" height="1" fill="#9cdcfe"/><rect x="22" y="112" width="1" height="1" fill="#d4d4d4"/><rect x="23" y="112" width="9" height="1" fill="#ce9178"/><rect x="32" y="112" width="1" height="1" fill="#d4d4d4"/><rect x="34" y="112" width="1" height="1" fill="#d4d4d4"/><rect x="36" y="112" width="16" height="1" fill="#9cdcfe"/><rect x="52" y="112" width="1" height="1" fill="#d4d4d4"/><rect x="12" y="114" width="19" height="1" fill="#dcdcaa"/><rect x="31" y="114" width="1" height="1" fill="#d4d4d4"/><rect x="32" y="114" width="10" height="1" fill="#9cdcfe"/><rect x="42" y="114" width="1" height="1" fill="#d4d4d4"/><rect x="44" y="114" width="6" height="1" fill="#9cdcfe"/><rect x="50" y="114" width="1" height="1" fill="#d4d4d4"/><rect x="51" y="114" width="1" height="1" fill="#d4d4d4"/><rect x="12" y="116" width="6" height="1" fill="#9cdcfe"/><rect x="18" y="116" width="1" height="1" fill="#d4d4d4"/><rect x="19" y="116" width="7" height="1" fill="#dcdcaa"/><rect x="26" y="116" width="1" height="1" fill="#d4d4d4"/><rect x="27" y="116" width="1" height="1" fill="#d4d4d4"/><rect x="28" y="116" width="1" height="1" fill="#d4d4d4"/><rect x="8" y="118" width="1" height="1" fill="#d4d4d4"/><rect x="8" y="120" width="5" height="1" fill="#9cdcfe"/><rect x="13" y="120" width="1" height="1" fill="#d4d4d4"/><rect x="14" y="120" width="5" height="1" fill="#dcdcaa"/><rect x="19" y="120" width="1" height="1" fill="#d4d4d4"/><rect x="20" y="120" width="1" height="1" fill="#d4d4d4"/><rect x="21" y="120" width="1" height="1" fill="#d4d4d4"/><rect x="4" y="122" width="1" height="1" fill="#d4d4d4"/><rect x="6" y="122" width="4" height="1" fill="#c586c0"/><rect x="11" y="122" width="1" height="1" fill="#d4d4d4"/><rect x="8" y="124" width="7" height="1" fill="#569cd6"/><rect x="15" y="124" width="1" height="1" fill="#d4d4d4"/><rect x="16" y="124" width="23" height="1" fill="#ce9178"/><rect x="39" y="124" width="1" height="1" fill="#d4d4d4"/><rect x="40" y="124" width="1" height="1" fill="#d4d4d4"/><rect x="4" y="126" width="1" height="1" fill="#d4d4d4"/><rect x="4" y="130" width="2" height="1" fill="#c586c0"/><rect x="7" y="130" width="1" height="1" fill="#d4d4d4"/><rect x="8" y="130" width="8" height="1" fill="#9cdcfe"/><rect x="16" y="130" width="1" height="1" fill="#d4d4d4"/><rect x="17" y="130" width="6" height="1" fill="#dcdcaa"/><rect x="23" y="130" width="1" height="1" fill="#d4d4d4"/><rect x="24" y="130" width="11" height="1" fill="#ce9178"/><rect x="35" y="130" width="1" height="1" fill="#d4d4d4"/><rect x="36" y="130" width="1" height="1" fill="#d4d4d4"/><rect x="38" y="130" width="1" height="1" fill="#d4d4d4"/><rect x="8" y="132" width="4" height="1" fill="#4ec9b0"/><rect x="13" y="132" width="5" height="1" fill="#9cdcfe"/><rect x="19" y="132" width="1" height="1" fill="#d4d4d4"/><rect x="21" y="132" width="8" height="1" fill="#9cdcfe"/><rect x="29" y="132" width="1" height="1" fill="#d4d4d4"/><rect x="30" y="132" width="4" height="1" fill="#dcdcaa"/><rect x="34" y="132" width="1" height="1" fill="#d4d4d4"/><rect x="35" y="132" width="11" height="1" fill="#ce9178"/><rect x="46" y="132" width="1" height="1" fill="#d4d4d4"/><rect x="48" y="132" width="3" height="1" fill="#ce9178"/><rect x="51" y="132" width="1" height="1" fill="#d4d4d4"/><rect x="52" y="132" width="1" height="1" fill="#d4d4d4"/><rect x="8" y="134" width="2" height="1" fill="#c586c0"/><rect x="11" y="134" width="1" height="1" fill="#d4d4d4"/><rect x="12" y="134" width="1" height="1" fill="#d4d4d4"/><rect x="13" y="134" width="5" height="1" fill="#9cdcfe"/><rect x="18" y="134" width="1" height="1" fill="#d4d4d4"/><rect x="20" y="134" width="1" height="1" fill="#d4d4d4"/><rect x="12" y="136" width="7" height="1" fill="#569cd6"/><rect x="19" y="136" width="1" height="1" fill="#d4d4d4"/><rect x="20" y="136" width="30" height="1" fill="#ce9178"/><rect x="50" y="136" width="1" height="1" fill="#d4d4d4"/><rect x="51" y="136" width="1" height="1" fill="#d4d4d4"/><rect x="12" y="138" width="6" height="1" fill="#c586c0"/><rect x="19" y="138" width="5" height="1" fill="#569cd6"/><rect x="24" y="138" width="1" height="1" fill="#d4d4d4"/><rect x="8" y="140" width="1" height="1" fill="#d4d4d4"/><rect x="8" y="142" width="2" height="1" fill="#c586c0"/><rect x="11" y="142" width="1" height="1" fill="#d4d4d4"/><rect x="12" y="142" width="5" height="1" fill="#9cdcfe"/><rect x="17" y="142" width="1" height="1" fill="#d4d4d4"/><rect x="18" y="142" width="4" height="1" fill="#dcdcaa"/><rect x="22" y="142" width="1" height="1" fill="#d4d4d4"/><rect x="23" y="142" width="1" height="1" fill="#d4d4d4"/><rect x="25" y="142" width="1" height="1" fill="#d4d4d4"/><rect x="27" y="142" width="1" height="1" fill="#b5cea8"/><rect x="28" y="142" width="1" height="1" fill="#d4d4d4"/><rect x="30" y="142" width="1" height="1" fill="#d4d4d4"/><rect x="12" y="144" width="20" height="1" fill="#9cdcfe"/><rect x="33" y="144" width="5" height="1" fill="#9cdcfe"/><rect x="39" y="144" width="1" height="1" fill="#d4d4d4"/><rect x="41" y="144" width="15" height="1" fill="#dcdcaa"/><rect x="56" y="144" width="1" height="1" fill="#d4d4d4"/><rect x="57" y="144" width="8" height="1" fill="#9cdcfe"/><rect x="65" y="144" width="1" height="1" fill="#d4d4d4"/><rect x="67" y="144" width="5" height="1" fill="#9cdcfe"/><rect x="72" y="144" width="1" height="1" fill="#d4d4d4"/><rect x="73" y="144" width="1" height="1" fill="#d4d4d4"/><rect x="12" y="146" width="2" height="1" fill="#c586c0"/><rect x="15" y="146" width="1" height="1" fill="#d4d4d4"/><rect x="16" y="146" width="5" height="1" fill="#9cdcfe"/><rect x="21" y="146" width="1" height="1" fill="#d4d4d4"/><rect x="23" y="146" width="1" height="1" fill="#d4d4d4"/><rect x="16" y="148" width="7" height="1" fill="#569cd6"/><rect x="23" y="148" width="1" height="1" fill="#d4d4d4"/><rect x="24" y="148" width="34" height="1" fill="#ce9178"/><rect x="58" y="148" width="1" height="1" fill="#d4d4d4"/><rect x="59" y="148" width="1" height="1" fill="#d4d4d4"/><rect x="16" y="150" width="6" height="1" fill="#c586c0"/><rect x="23" y="150" width="5" height="1" fill="#569cd6"/><rect x="28" y="150" width="1" height="1" fill="#d4d4d4"/><rect x="12" y="152" width="1" height="1" fill="#d4d4d4"/><rect x="8" y="154" width="1" height="1" fill="#d4d4d4"/><rect x="8" y="156" width="5" height="1" fill="#9cdcfe"/><rect x="13" y="156" width="1" height="1" fill="#d4d4d4"/><rect x="14" y="156" width="5" height="1" fill="#dcdcaa"/><rect x="19" y="156" width="1" height="1" fill="#d4d4d4"/><rect x="20" y="156" width="1" height="1" fill="#d4d4d4"/><rect x="21" y="156" width="1" height="1" fill="#d4d4d4"/><rect x="4" y="158" width="1" height="1" fill="#d4d4d4"/><rect x="4" y="160" width="3" height="1" fill="#9cdcfe"/><rect x="8" y="160" width="1" height="1" fill="#d4d4d4"/><rect x="10" y="160" width="4" height="1" fill="#569cd6"/><rect x="14" y="160" width="1" height="1" fill="#d4d4d4"/><rect x="4" y="162" width="6" height="1" fill="#c586c0"/><rect x="11" y="162" width="3" height="1" fill="#9cdcfe"/><rect x="14" y="162" width="1" height="1" fill="#d4d4d4"/><rect x="0" y="164" width="1" height="1" fill="#d4d4d4"/><rect x="0" y="168" width="4" height="1" fill="#569cd6"/><rect x="5" y="168" width="13" height="1" fill="#dcdcaa"/><rect x="18" y="168" width="1" height="1" fill="#d4d4d4"/><rect x="19" y="168" width="1" height="1" fill="#d4d4d4"/><rect x="0" y="170" width="1" height="1" fill="#d4d4d4"/><rect x="4" y="172" width="7" height="1" fill="#569cd6"/><rect x="11" y="172" width="1" height="1" fill="#d4d4d4"/><rect x="12" y="172" width="16" height="1" fill="#ce9178"/><rect x="28" y="172" width="1" height="1" fill="#d4d4d4"/><rect x="29" y="172" width="1" height="1" fill="#d4d4d4"/><rect x="4" y="174" width="8" height="1" fill="#9cdcfe"/><rect x="12" y="174" width="1" height="1" fill="#d4d4d4"/><rect x="13" y="174" width="6" height="1" fill="#dcdcaa"/><rect x="19" y="174" width="1" height="1" fill="#d4d4d4"/><rect x="20" y="174" width="9" height="1" fill="#ce9178"/><rect x="29" y="174" width="1" height="1" fill="#d4d4d4"/><rect x="30" y="174" width="1" height="1" fill="#d4d4d4"/><rect x="4" y="176" width="8" height="1" fill="#9cdcfe"/><rect x="12" y="176" width="1" height="1" fill="#d4d4d4"/><rect x="13" y="176" width="6" height="1" fill="#dcdcaa"/><rect x="19" y="176" width="1" height="1" fill="#d4d4d4"/><rect x="20" y="176" width="1" height="1" fill="#d4d4d4"/><rect x="21" y="176" width="1" height="1" fill="#d4d4d4"/><rect x="4" y="178" width="3" height="1" fill="#9cdcfe"/><rect x="7" y="178" width="1" height="1" fill="#d4d4d4"/><rect x="8" y="178" width="5" height="1" fill="#dcdcaa"/><rect x="13" y="178" width="1" height="1" fill="#d4d4d4"/><rect x="14" y="178" width="1" height="1" fill="#d4d4d4"/><rect x="15" y="178" width="1" height="1" fill="#d4d4d4"/><rect x="0" y="180" width="1" height="1" fill="#d4d4d4"/><rect x="0" y="184" width="4" height="1" fill="#569cd6"/><rect x="5" y="184" width="11" height="1" fill="#dcdcaa"/><rect x="16" y="184" width="1" height="1" fill="#d4d4d4"/><rect x="17" y="184" width="6" height="1" fill="#9cdcfe"/><rect x="24" y="184" width="3" height="1" fill="#9cdcfe"/><rect x="27" y="184" width="1" height="1" fill="#d4d4d4"/><rect x="29" y="184" width="6" height="1" fill="#9cdcfe"/><rect x="36" y="184" width="1" height="1" fill="#d4d4d4"/><rect x="37" y="184" width="5" height="1" fill="#9cdcfe"/><rect x="42" y="184" width="1" height="1" fill="#d4d4d4"/><rect x="0" y="186" width="1" height="1" fill="#d4d4d4"/><rect x="4" y="188" width="4" height="1" fill="#569cd6"/><rect x="9" y="188" width="3" height="1" fill="#9cdcfe"/><rect x="13" y="188" width="1" height="1" fill="#d4d4d4"/><rect x="15" y="188" width="5" height="1" fill="#569cd6"/><rect x="20" y="188" width="1" height="1" fill="#d4d4d4"/><rect x="4" y="190" width="10" height="1" fill="#9cdcfe"/><rect x="14" y="190" width="1" height="1" fill="#d4d4d4"/><rect x="15" y="190" width="6" height="1" fill="#ce9178"/><rect x="21" y="190" width="1" height="1" fill="#d4d4d4"/><rect x="22" y="190" width="1" height="1" fill="#d4d4d4"/><rect x="23" y="190" width="6" height="1" fill="#ce9178"/><rect x="29" y="190" width="1" height="1" fill="#d4d4d4"/><rect x="31" y="190" width="1" height="1" fill="#d4d4d4"/><rect x="33" y="190" width="2" height="1" fill="#ce9178"/><rect x="35" y="190" width="1" height="1" fill="#d4d4d4"/><rect x="4" y="192" width="10" height="1" fill="#9cdcfe"/><rect x="14" y="192" width="1" height="1" fill="#d4d4d4"/><rect x="15" y="192" width="6" height="1" fill="#ce9178"/><rect x="21" y="192" width="1" height="1" fill="#d4d4d4"/><rect x="22" y="192" width="1" height="1" fill="#d4d4d4"/><rect x="23" y="192" width="6" height="1" fill="#ce9178"/><rect x="29" y="192" width="1" height="1" fill="#d4d4d4"/><rect x="31" y="192" width="1" height="1" fill="#d4d4d4"/><rect x="33" y="192" width="4" height="1" fill="#b5cea8"/><rect x="37" y="192" width="1" height="1" fill="#d4d4d4"/><rect x="4" y="194" width="10" height="1" fill="#9cdcfe"/><rect x="14" y="194" width="1" height="1" fill="#d4d4d4"/><rect x="15" y="194" width="6" height="1" fill="#ce9178"/><rect x="21" y="194" width="1" height="1" fill="#d4d4d4"/><rect x="22" y="194" width="1" height="1" fill="#d4d4d4"/><rect x="23" y="194" width="6" height="1" fill="#ce9178"/><rect x="29" y="194" width="1" height="1" fill="#d4d4d4"/><rect x="31" y="194" width="1" height="1" fill="#d4d4d4"/><rect x="33" y="194" width="2" height="1" fill="#ce9178"/><rect x="35" y="194" width="1" height="1" fill="#d4d4d4"/><rect x="4" y="196" width="10" height="1" fill="#9cdcfe"/><rect x="14" y="196" width="1" height="1" fill="#d4d4d4"/><rect x="15" y="196" width="6" height="1" fill="#ce9178"/><rect x="21" y="196" width="1" height="1" fill="#d4d4d4"/><rect x="22" y="196" width="1" height="1" fill="#d4d4d4"/><rect x="23" y="196" width="6" height="1" fill="#ce9178"/><rect x="29" y="196" width="1" height="1" fill="#d4d4d4"/><rect x="31" y="196" width="1" height="1" fill="#d4d4d4"/><rect x="33" y="196" width="2" height="1" fill="#ce9178"/><rect x="35" y="196" width="1" height="1" fill="#d4d4d4"/><rect x="4" y="198" width="10" height="1" fill="#9cdcfe"/><rect x="14" y="198" width="1" height="1" fill="#d4d4d4"/><rect x="15" y="198" width="6" height="1" fill="#ce9178"/><rect x="21" y="198" width="1" height="1" fill="#d4d4d4"/><rect x="22" y="198" width="1" height="1" fill="#d4d4d4"/><rect x="23" y="198" width="10" height="1" fill="#ce9178"/><rect x="33" y="198" width="1" height="1" fill="#d4d4d4"/><rect x="35" y="198" width="1" height="1" fill="#d4d4d4"/><rect x="37" y="198" width="2" height="1" fill="#b5cea8"/><rect x="39" y="198" width="1" height="1" fill="#d4d4d4"/><rect x="4" y="200" width="6" height="1" fill="#c586c0"/><rect x="11" y="200" width="3" height="1" fill="#9cdcfe"/><rect x="14" y="200" width="1" height="1" fill="#d4d4d4"/><rect x="0" y="202" width="1" height="1" fill="#d4d4d4"/><rect x="0" y="206" width="17" height="1" fill="#9cdcfe"/><rect x="18" y="206" width="12" height="1" fill="#dcdcaa"/><rect x="30" y="206" width="1" height="1" fill="#d4d4d4"/><rect x="31" y="206" width="6" height="1" fill="#9cdcfe"/><rect x="38" y="206" width="4" height="1" fill="#9cdcfe"/><rect x="42" y="206" width="1" height="1" fill="#d4d4d4"/><rect x="0" y="208" width="1" height="1" fill="#d4d4d4"/><rect x="4" y="210" width="17" height="1" fill="#9cdcfe"/><rect x="22" y="210" width="5" height="1" fill="#9cdcfe"/><rect x="27" y="210" width="1" height="1" fill="#d4d4d4"/><rect x="4" y="212" width="2" height="1" fill="#c586c0"/><rect x="7" y="212" width="1" height="1" fill="#d4d4d4"/><rect x="8" y="212" width="4" height="1" fill="#9cdcfe"/><rect x="13" y="212" width="1" height="1" fill="#d4d4d4"/><rect x="14" y="212" width="1" height="1" fill="#d4d4d4"/><rect x="16" y="212" width="4" height="1" fill="#ce9178"/><rect x="20" y="212" width="1" height="1" fill="#d4d4d4"/><rect x="22" y="212" width="5" height="1" fill="#9cdcfe"/><rect x="27" y="212" width="1" height="1" fill="#d4d4d4"/><rect x="28" y="212" width="5" height="1" fill="#9cdcfe"/><rect x="34" y="212" width="1" height="1" fill="#d4d4d4"/><rect x="36" y="212" width="8" height="1" fill="#9cdcfe"/><rect x="44" y="212" width="1" height="1" fill="#d4d4d4"/><rect x="4" y="214" width="2" height="1" fill="#c586c0"/><rect x="7" y="214" width="1" height="1" fill="#d4d4d4"/><rect x="8" y="214" width="4" height="1" fill="#9cdcfe"/><rect x="13" y="214" width="1" height="1" fill="#d4d4d4"/><rect x="14" y="214" width="1" height="1" fill="#d4d4d4"/><rect x="16" y="214" width="4" height="1" fill="#ce9178"/><rect x="20" y="214" width="1" height="1" fill="#d4d4d4"/><rect x="22" y="214" width="5" height="1" fill="#9cdcfe"/><rect x="27" y="214" width="1" height="1" fill="#d4d4d4"/><rect x="28" y="214" width="5" height="1" fill="#9cdcfe"/><rect x="34" y="214" width="1" height="1" fill="#d4d4d4"/><rect x="36" y="214" width="8" height="1" fill="#9cdcfe"/><rect x="44" y="214" width="1" height="1" fill="#d4d4d4"/><rect x="4" y="216" width="2" height="1" fill="#c586c0"/><rect x="7" y="216" width="1" height="1" fill="#d4d4d4"/><rect x="8" y="216" width="4" height="1" fill="#9cdcfe"/><rect x="13" y="216" width="1" height="1" fill="#d4d4d4"/><rect x="14" y="216" width="1" height="1" fill="#d4d4d4"/><rect x="16" y="216" width="4" height="1" fill="#ce9178"/><rect x="20" y="216" width="1" height="1" fill="#d4d4d4"/><rect x="22" y="216" width="5" height="1" fill="#9cdcfe"/><rect x="27" y="216" width="1" height="1" fill="#d4d4d4"/><rect x="28" y="216" width="5" height="1" fill="#9cdcfe"/><rect x="34" y="216" width="1" height="1" fill="#d4d4d4"/><rect x="36" y="216" width="8" height="1" fill="#9cdcfe"/><rect x="44" y="216" width="1" height="1" fill="#d4d4d4"/><rect x="4" y="218" width="2" height="1" fill="#c586c0"/><rect x="7" y="218" width="1" height="1" fill="#d4d4d4"/><rect x="8" y="218" width="4" height="1" fill="#9cdcfe"/><rect x="13" y="218" width="1" height="1" fill="#d4d4d4"/><rect x="14" y="218" width="1" height="1" fill="#d4d4d4"/><rect x="16" y="218" width="6" height="1" fill="#ce9178"/><rect x="22" y="218" width="1" height="1" fill="#d4d4d4"/><rect x="24" y="218" width="5" height="1" fill="#9cdcfe"/><rect x="29" y="218" width="1" height="1" fill="#d4d4d4"/><rect x="30" y="218" width="5" height="1" fill="#9cdcfe"/><rect x="36" y="218" width="1" height="1" fill="#d4d4d4"/><rect x="38" y="218" width="10" height="1" fill="#9cdcfe"/><rect x="48" y="218" width="1" height="1" fill="#d4d4d4"/><rect x="4" y="220" width="5" height="1" fill="#9cdcfe"/><rect x="9" y="220" width="1" height="1" fill="#d4d4d4"/><rect x="10" y="220" width="7" height="1" fill="#9cdcfe"/><rect x="18" y="220" width="1" height="1" fill="#d4d4d4"/><rect x="20" y="220" width="11" height="1" fill="#9cdcfe"/><rect x="31" y="220" width="1" height="1" fill="#d4d4d4"/><rect x="4" y="222" width="5" height="1" fill="#9cdcfe"/><rect x="9" y="222" width="1" height="1" fill="#d4d4d4"/><rect x="10" y="222" width="7" height="1" fill="#9cdcfe"/><rect x="18" y="222" width="1" height="1" fill="#d4d4d4"/><rect x="20" y="222" width="11" height="1" fill="#9cdcfe"/><rect x="31" y="222" width="1" height="1" fill="#d4d4d4"/><rect x="4" y="224" width="5" height="1" fill="#9cdcfe"/><rect x="9" y="224" width="1" height="1" fill="#d4d4d4"/><rect x="10" y="224" width="7" height="1" fill="#9cdcfe"/><rect x="18" y="224" width="1" height="1" fill="#d4d4d4"/><rect x="20" y="224" width="11" height="1" fill="#9cdcfe"/><rect x="31" y="224" width="1" height="1" fill="#d4d4d4"/><rect x="4" y="226" width="5" height="1" fill="#9cdcfe"/><rect x="9" y="226" width="1" height="1" fill="#d4d4d4"/><rect x="10" y="226" width="7" height="1" fill="#9cdcfe"/><rect x="18" y="226" width="1" height="1" fill="#d4d4d4"/><rect x="20" y="226" width="11" height="1" fill="#9cdcfe"/><rect x="31" y="226" width="1" height="1" fill="#d4d4d4"/><rect x="4" y="228" width="5" height="1" fill="#9cdcfe"/><rect x="9" y="228" width="1" height="1" fill="#d4d4d4"/><rect x="10" y="228" width="3" height="1" fill="#9cdcfe"/><rect x="14" y="228" width="1" height="1" fill="#d4d4d4"/><rect x="16" y="228" width="7" height="1" fill="#9cdcfe"/><rect x="24" y="228" width="1" height="1" fill="#d4d4d4"/><rect x="26" y="228" width="5" height="1" fill="#9cdcfe"/><rect x="31" y="228" width="1" height="1" fill="#d4d4d4"/><rect x="32" y="228" width="5" height="1" fill="#9cdcfe"/><rect x="37" y="228" width="1" height="1" fill="#d4d4d4"/><rect x="4" y="230" width="6" height="1" fill="#c586c0"/><rect x="11" y="230" width="5" height="1" fill="#9cdcfe"/><rect x="16" y="230" width="1" height="1" fill="#d4d4d4"/><rect x="0" y="232" width="1" height="1" fill="#d4d4d4"/></svg>
<div class="a" style="left:1788px;top:213px;width:2px;height:2px;background:#1b81a8"></div>
<svg class="a" style="left:0;top:0" width="400" height="600"><polyline points="248.9,212.8 245.6,210.6 232.2,209.2 220,208.9 213.3,207 195.6,206.1 188.9,203 180,203 128,202.6 116,203.6 107.6,205.9 98.4,209.6 87.3,213.7 79.9,217.4 72.4,221.6 65,225.8 58.6,230.4 51.1,237.8 43.3,246.6 40,253.6 36.8,261 34.5,266.5 33.1,276.7 32.6,298 33.3,341.7 34.7,348.6 38.9,358.3 42.4,372.2 45.8,382 50,395.8 54.2,408.3 61.1,422.2 65.3,433.3 75.3,449.2 80.8,464.4 87.8,471.4 100.3,488 115.6,507.5 119.7,515.8 135,525.6 146.1,533.9 166.7,540.3 171.1,544.3 192,544.3 204.2,538.9 208.3,534.7 220.8,527.8 227.8,523.6 240.3,512.5 251.4,501.4 259.7,490.3 268.8,482 272.2,470.8 277.8,458.3 283.3,445.8 284,436 286.8,427.8 286.1,420.8 289.6,412.5 289.6,400 290,315 289.4,306.1 287.2,300.6 286.1,281.7 283.9,270.6 278.3,255 276.7,242.8 272.2,233.9 270,221.7 268.9,213.9 264.4,208.3 260,205.6 251.1,205.6 247.8,206.1" fill="none" stroke="#ff0000" stroke-width="2.5" stroke-linejoin="round" stroke-linecap="round"/></svg>
</body></html>
